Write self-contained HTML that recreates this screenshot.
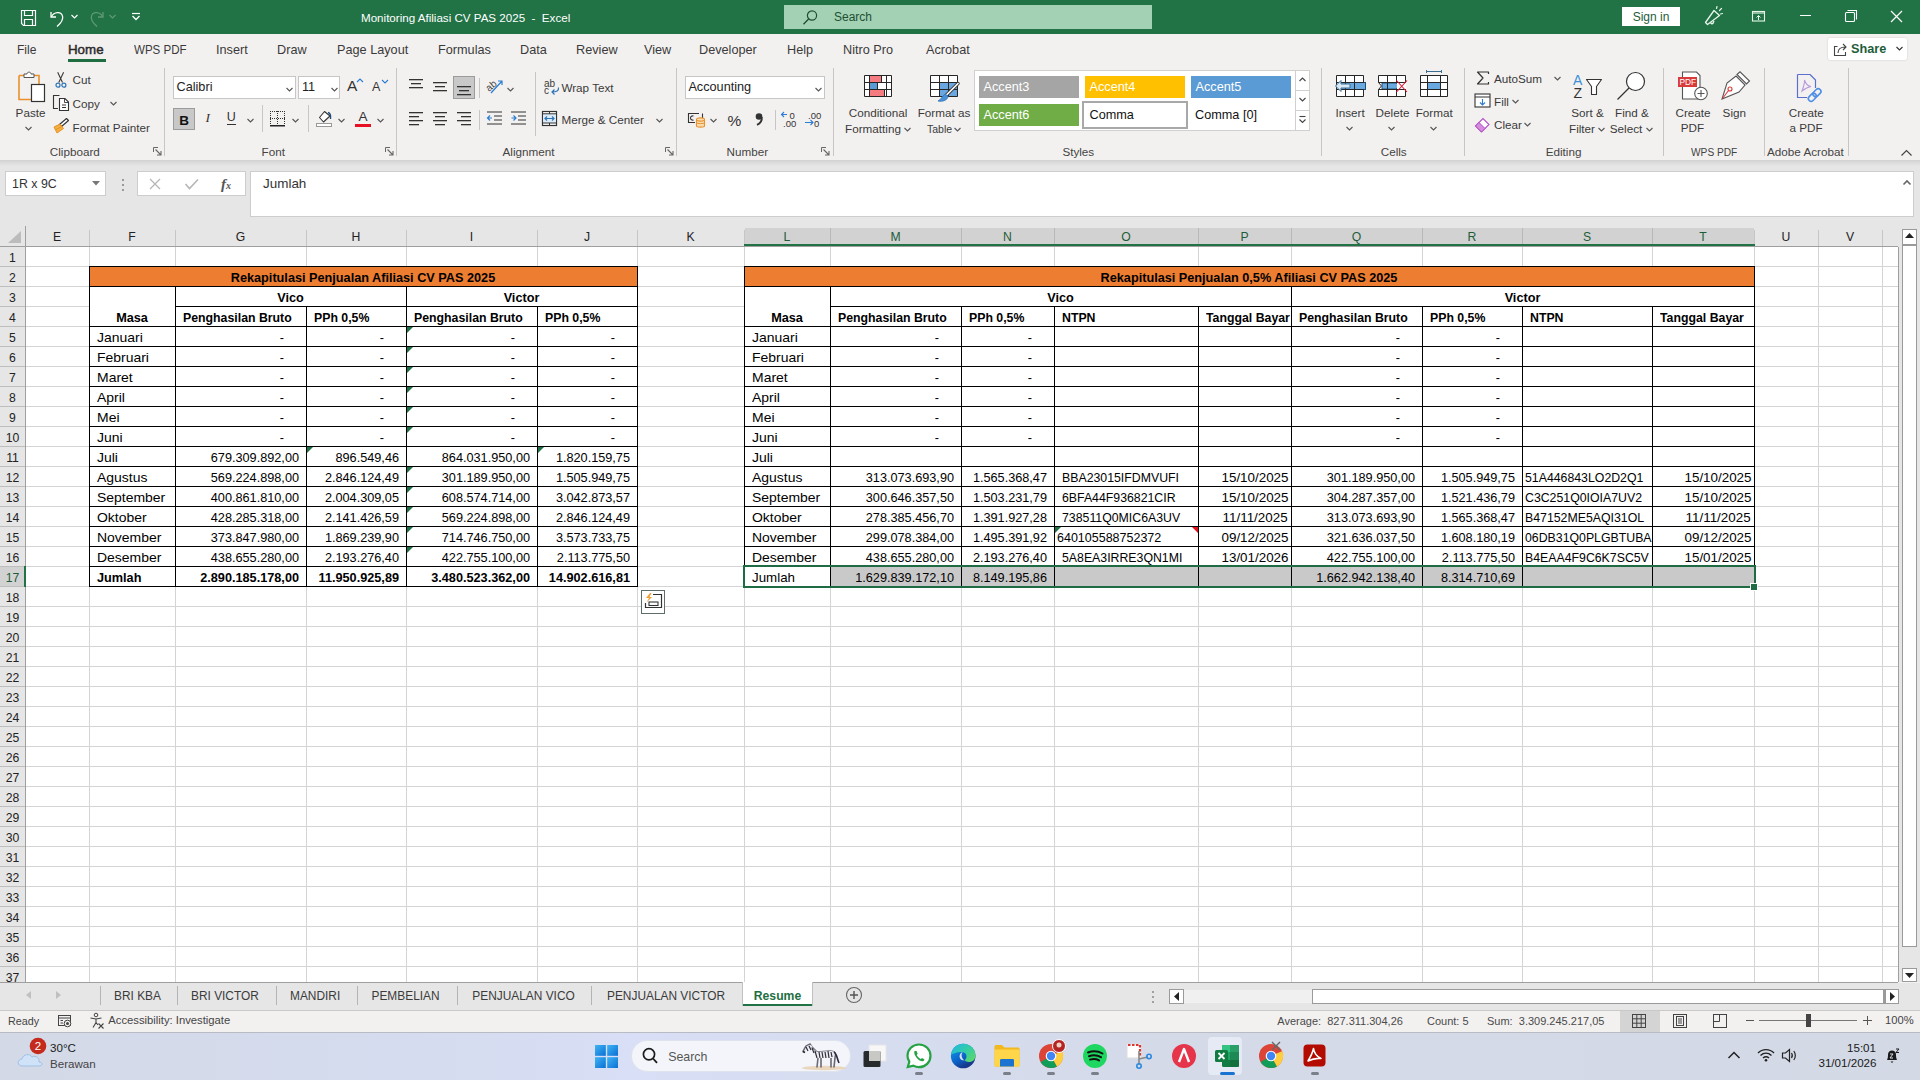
<!DOCTYPE html>
<html><head><meta charset="utf-8"><style>
html,body{margin:0;padding:0;}
body{width:1920px;height:1080px;overflow:hidden;position:relative;background:#f3f2f1;font-family:'Liberation Sans', sans-serif;}
.t{position:absolute;white-space:pre;line-height:1;}
.r{position:absolute;}
.s{position:absolute;overflow:visible;}
</style></head><body>
<div class="r" style="left:0px;top:0px;width:1920px;height:34px;background:#217346;"></div>
<svg class="s" style="left:20px;top:9px;" width="18" height="18" viewBox="0 0 18 18"><path d="M1.5 1.5 H15.5 V16.5 H3.5 L1.5 14.5 Z" fill="none" stroke="#fff" stroke-width="1.2"/><path d="M4.5 1.5 V6.5 H12.5 V1.5" fill="none" stroke="#fff" stroke-width="1.2"/><path d="M4.5 16.5 V10.5 H12.5 V16.5" fill="none" stroke="#fff" stroke-width="1.2"/></svg>
<svg class="s" style="left:48px;top:8px;" width="20" height="20" viewBox="0 0 20 20"><path d="M3 4 V9 H8" fill="none" stroke="#fff" stroke-width="1.3"/><path d="M3.5 8.5 C6 4 13 3 14.5 8 C15.5 11 13 15 9 18.5" fill="none" stroke="#fff" stroke-width="1.3"/></svg>
<svg class="s" style="left:70px;top:13px;" width="10" height="8" viewBox="0 0 10 8"><path d="M1.5 2 L4.5 5 L7.5 2" fill="none" stroke="#fff" stroke-width="1.2"/></svg>
<svg class="s" style="left:86px;top:8px;" width="20" height="20" viewBox="0 0 20 20"><path d="M17 4 V9 H12" fill="none" stroke="#5f9a76" stroke-width="1.3"/><path d="M16.5 8.5 C14 4 7 3 5.5 8 C4.5 11 7 15 11 18.5" fill="none" stroke="#5f9a76" stroke-width="1.3"/></svg>
<svg class="s" style="left:108px;top:13px;" width="10" height="8" viewBox="0 0 10 8"><path d="M1.5 2 L4.5 5 L7.5 2" fill="none" stroke="#5f9a76" stroke-width="1.2"/></svg>
<svg class="s" style="left:130px;top:12px;" width="12" height="10" viewBox="0 0 12 10"><path d="M2 1.5 H10" stroke="#fff" stroke-width="1.2"/><path d="M2.5 4 L6 7.5 L9.5 4" fill="none" stroke="#fff" stroke-width="1.3"/></svg>
<div class="t" style="left:361.00px;top:11.84px;font-size:11.6px;color:#ffffff;">Monitoring Afiliasi CV PAS 2025&nbsp; -&nbsp; Excel</div>
<div class="r" style="left:784px;top:5px;width:368px;height:24px;background:#a2d1b3;"></div>
<svg class="s" style="left:801px;top:9px;" width="18" height="17" viewBox="0 0 18 17"><circle cx="11" cy="6.5" r="4.6" fill="none" stroke="#1f4f33" stroke-width="1.2"/><path d="M7.6 10 L2.5 15.2" stroke="#1f4f33" stroke-width="1.3"/></svg>
<div class="t" style="left:834.00px;top:10.80px;font-size:12px;color:#1f4f33;">Search</div>
<div class="r" style="left:1622px;top:7px;width:58px;height:19px;background:#ffffff;"></div>
<div class="t" style="left:1251.00px;width:800px;text-align:center;top:11.30px;font-size:12px;color:#1e5d3a;">Sign in</div>
<svg class="s" style="left:1700px;top:5px;" width="26" height="24" viewBox="0 0 26 24"><path d="M5.5 17.5 L14 5.5 L19.5 10.5 L7.5 19.5 Z" fill="none" stroke="#e6f6ea" stroke-width="1.3" stroke-linejoin="round"/><path d="M10.5 17 C11 19.5 13 19.5 14 16" fill="none" stroke="#e6f6ea" stroke-width="1.3"/><path d="M16.5 3.5 L17 1.5 M19.5 5.5 L21.5 3.5 M20.5 9 L22.5 8.5" stroke="#e6f6ea" stroke-width="1.2" stroke-linecap="round"/></svg>
<svg class="s" style="left:1750px;top:10px;" width="17" height="13" viewBox="0 0 17 13"><rect x="2.5" y="1.5" width="12" height="9.5" fill="none" stroke="#e6f6ea" stroke-width="1.1"/><path d="M2.5 3 H14.5" stroke="#e6f6ea" stroke-width="1.1"/><path d="M8.5 10 V5.5 M6.5 7.5 L8.5 5.5 L10.5 7.5" fill="none" stroke="#e6f6ea" stroke-width="1"/></svg>
<div class="r" style="left:1800px;top:15px;width:11px;height:1px;background:#ffffff;"></div>
<svg class="s" style="left:1844px;top:9px;" width="14" height="14" viewBox="0 0 14 14"><rect x="1.5" y="3.5" width="9" height="9" fill="none" stroke="#fff" stroke-width="1.1" rx="1"/><path d="M3.5 1.5 H12.5 V10.5" fill="none" stroke="#fff" stroke-width="1.1"/></svg>
<svg class="s" style="left:1890px;top:10px;" width="13" height="13" viewBox="0 0 13 13"><path d="M1 1 L12 12 M12 1 L1 12" stroke="#fff" stroke-width="1.2"/></svg>
<div class="r" style="left:0px;top:34px;width:1920px;height:127px;background:#f3f1f0;"></div>
<div class="t" style="left:17.00px;top:43.50px;font-size:12.7px;color:#3a3a3a;transform:scaleX(0.95);transform-origin:left 0;">File</div>
<div class="t" style="left:68.00px;top:43.50px;font-size:12.7px;color:#2b2b2b;-webkit-text-stroke:0.45px #2b2b2b;transform:scaleX(1.05);transform-origin:left 0;">Home</div>
<div class="t" style="left:134.00px;top:43.50px;font-size:12.7px;color:#3a3a3a;transform:scaleX(0.91);transform-origin:left 0;">WPS PDF</div>
<div class="t" style="left:216.00px;top:43.50px;font-size:12.7px;color:#3a3a3a;">Insert</div>
<div class="t" style="left:277.00px;top:43.50px;font-size:12.7px;color:#3a3a3a;">Draw</div>
<div class="t" style="left:337.00px;top:43.50px;font-size:12.7px;color:#3a3a3a;">Page Layout</div>
<div class="t" style="left:438.00px;top:43.50px;font-size:12.7px;color:#3a3a3a;">Formulas</div>
<div class="t" style="left:520.00px;top:43.50px;font-size:12.7px;color:#3a3a3a;">Data</div>
<div class="t" style="left:576.00px;top:43.50px;font-size:12.7px;color:#3a3a3a;">Review</div>
<div class="t" style="left:644.00px;top:43.50px;font-size:12.7px;color:#3a3a3a;">View</div>
<div class="t" style="left:699.00px;top:43.50px;font-size:12.7px;color:#3a3a3a;">Developer</div>
<div class="t" style="left:787.00px;top:43.50px;font-size:12.7px;color:#3a3a3a;">Help</div>
<div class="t" style="left:843.00px;top:43.50px;font-size:12.7px;color:#3a3a3a;">Nitro Pro</div>
<div class="t" style="left:926.00px;top:43.50px;font-size:12.7px;color:#3a3a3a;">Acrobat</div>
<div class="r" style="left:68px;top:59px;width:38px;height:3px;background:#1e6e42;"></div>
<div class="r" style="left:1828px;top:38px;width:79px;height:22px;background:#ffffff;box-shadow:0 0 2px rgba(0,0,0,0.18);border-radius:2px;"></div>
<svg class="s" style="left:1833px;top:42px;" width="15" height="15" viewBox="0 0 15 15"><path d="M4.5 4.5 H1.5 V13.5 H12.5 V10" fill="none" stroke="#444" stroke-width="1.1"/><path d="M5 11 C5 7 8 5 12.5 5 M10 2 L13 5 L10 8" fill="none" stroke="#444" stroke-width="1.1"/></svg>
<div class="t" style="left:1851.00px;top:42.91px;font-size:12.7px;color:#1e5d3a;font-weight:bold;">Share</div>
<svg class="s" style="left:1895px;top:45px;" width="10" height="8" viewBox="0 0 10 8"><path d="M1.5 2 L4.5 5 L7.5 2" fill="none" stroke="#333" stroke-width="1.1"/></svg>
<svg class="s" style="left:16px;top:71px;" width="32" height="32" viewBox="0 0 32 32"><path d="M3 4.5 H9 M17 4.5 H23 V13" fill="none" stroke="#e8912d" stroke-width="1.6"/><path d="M3 4.5 V28.5 H15" fill="none" stroke="#e8912d" stroke-width="1.6"/><path d="M8 6.5 V3 H11 C11 0.5 15 0.5 15 3 H18 V6.5 Z" fill="#fff" stroke="#555" stroke-width="1"/><rect x="15.5" y="13.5" width="13" height="17" fill="#fff" stroke="#333" stroke-width="1.2"/></svg>
<div class="t" style="left:15.60px;top:106.66px;font-size:11.7px;color:#3a3a3a;">Paste</div>
<svg class="s" style="left:23.5px;top:125px;" width="9" height="7" viewBox="0 0 9 7"><path d="M1.5 2 L4.5 5 L7.5 2" fill="none" stroke="#555" stroke-width="1.1"/></svg>
<svg class="s" style="left:54px;top:70px;" width="13" height="19" viewBox="0 0 13 19"><path d="M3.7 2.2 L8.5 12.5 M9.6 2.2 L4.8 12.5" stroke="#3a3a3a" stroke-width="1.1"/><circle cx="4" cy="15.2" r="2" fill="none" stroke="#2e75b6" stroke-width="1.2"/><circle cx="9.9" cy="15.2" r="2" fill="none" stroke="#2e75b6" stroke-width="1.2"/></svg>
<div class="t" style="left:72.60px;top:74.06px;font-size:11.7px;color:#3a3a3a;">Cut</div>
<svg class="s" style="left:52px;top:94px;" width="18" height="18" viewBox="0 0 18 18"><path d="M7.5 1.5 H1.5 V14.5 H6" fill="none" stroke="#333" stroke-width="1.1"/><path d="M7.5 4.5 H13 L16.5 8 V16.5 H7.5 Z" fill="#fff" stroke="#333" stroke-width="1.1"/><path d="M12.5 4.5 V8.5 H16.5" fill="none" stroke="#333" stroke-width="0.9"/><path d="M10 11 H14 M10 13.5 H14" stroke="#333" stroke-width="1"/></svg>
<div class="t" style="left:72.60px;top:97.56px;font-size:11.7px;color:#3a3a3a;">Copy</div>
<svg class="s" style="left:109.0px;top:100px;" width="9" height="7" viewBox="0 0 9 7"><path d="M1.5 2 L4.5 5 L7.5 2" fill="none" stroke="#555" stroke-width="1.1"/></svg>
<svg class="s" style="left:52px;top:117px;" width="18" height="18" viewBox="0 0 18 18"><path d="M7.5 7.5 L14.5 1.5 L16.5 3.5 L9.5 9.5 Z" fill="#fff" stroke="#333" stroke-width="1.1" stroke-linejoin="round"/><path d="M8 7 L2 10 L5 16 L11.5 11.5 Z" fill="#f5b041" stroke="#e08a1e" stroke-width="0.9" stroke-linejoin="round"/><path d="M4 12.5 L9 10" stroke="#e08a1e" stroke-width="0.8"/></svg>
<div class="t" style="left:72.60px;top:121.75px;font-size:11.7px;color:#3a3a3a;">Format Painter</div>
<div class="t" style="left:49.80px;top:145.56px;font-size:11.7px;color:#444444;">Clipboard</div>
<svg class="s" style="left:153px;top:147px;" width="9" height="9" viewBox="0 0 9 9"><path d="M0.5 5 V0.5 H5" fill="none" stroke="#666" stroke-width="1"/><path d="M2.5 2.5 L8 8 M8 4 V8 H4" fill="none" stroke="#666" stroke-width="1.1"/></svg>
<div class="r" style="left:164px;top:68px;width:1px;height:88px;background:#c8c6c4;"></div>
<div class="r" style="left:173px;top:76px;width:123px;height:23px;background:#ffffff;box-shadow:inset 0 0 0 1px #c8c6c4;"></div>
<div class="t" style="left:176.50px;top:80.70px;font-size:12.7px;color:#222;">Calibri</div>
<svg class="s" style="left:284.5px;top:85.5px;" width="9" height="7" viewBox="0 0 9 7"><path d="M1.5 2 L4.5 5 L7.5 2" fill="none" stroke="#555" stroke-width="1.1"/></svg>
<div class="r" style="left:298px;top:76px;width:42px;height:23px;background:#ffffff;box-shadow:inset 0 0 0 1px #c8c6c4;"></div>
<div class="t" style="left:302.00px;top:80.70px;font-size:12.7px;color:#222;">11</div>
<svg class="s" style="left:329.5px;top:85.5px;" width="9" height="7" viewBox="0 0 9 7"><path d="M1.5 2 L4.5 5 L7.5 2" fill="none" stroke="#555" stroke-width="1.1"/></svg>
<div class="t" style="left:347.00px;top:78.33px;font-size:15.5px;color:#333;">A</div>
<svg class="s" style="left:356px;top:78px;" width="8" height="5" viewBox="0 0 8 5"><path d="M1 4 L4 1 L7 4" fill="none" stroke="#2b7cd3" stroke-width="1.1"/></svg>
<div class="t" style="left:372.00px;top:80.88px;font-size:12.5px;color:#333;">A</div>
<svg class="s" style="left:381px;top:79px;" width="8" height="5" viewBox="0 0 8 5"><path d="M1 1 L4 4 L7 1" fill="none" stroke="#2b7cd3" stroke-width="1.1"/></svg>
<div class="r" style="left:173px;top:108px;width:22px;height:22px;background:#c8c8c8;box-shadow:inset 0 0 0 1px #9c9c9c;"></div>
<div class="t" style="left:-216.00px;width:800px;text-align:center;top:113.53px;font-size:13.5px;color:#111;font-weight:bold;">B</div>
<div class="t" style="left:205.50px;top:111.03px;font-size:13.5px;color:#333;font-family:'Liberation Serif';"><i>I</i></div>
<div class="t" style="left:226.80px;top:111.38px;font-size:12.5px;color:#333;">U</div>
<div class="r" style="left:227px;top:124px;width:9px;height:1px;background:#333;"></div>
<svg class="s" style="left:245.5px;top:117px;" width="9" height="7" viewBox="0 0 9 7"><path d="M1.5 2 L4.5 5 L7.5 2" fill="none" stroke="#555" stroke-width="1.1"/></svg>
<div class="r" style="left:262px;top:105px;width:1px;height:27px;background:#c8c6c4;"></div>
<svg class="s" style="left:270px;top:111px;" width="17" height="17" viewBox="0 0 17 17"><rect x="0" y="0" width="1" height="1" fill="#333"/><rect x="0" y="0" width="1" height="1" fill="#333"/><rect x="14" y="0" width="1" height="1" fill="#333"/><rect x="0" y="7" width="1" height="1" fill="#333"/><rect x="7" y="0" width="1" height="1" fill="#333"/><rect x="2" y="0" width="1" height="1" fill="#333"/><rect x="0" y="2" width="1" height="1" fill="#333"/><rect x="14" y="2" width="1" height="1" fill="#333"/><rect x="2" y="7" width="1" height="1" fill="#333"/><rect x="7" y="2" width="1" height="1" fill="#333"/><rect x="4" y="0" width="1" height="1" fill="#333"/><rect x="0" y="4" width="1" height="1" fill="#333"/><rect x="14" y="4" width="1" height="1" fill="#333"/><rect x="4" y="7" width="1" height="1" fill="#333"/><rect x="7" y="4" width="1" height="1" fill="#333"/><rect x="6" y="0" width="1" height="1" fill="#333"/><rect x="0" y="6" width="1" height="1" fill="#333"/><rect x="14" y="6" width="1" height="1" fill="#333"/><rect x="6" y="7" width="1" height="1" fill="#333"/><rect x="7" y="6" width="1" height="1" fill="#333"/><rect x="8" y="0" width="1" height="1" fill="#333"/><rect x="0" y="8" width="1" height="1" fill="#333"/><rect x="14" y="8" width="1" height="1" fill="#333"/><rect x="8" y="7" width="1" height="1" fill="#333"/><rect x="7" y="8" width="1" height="1" fill="#333"/><rect x="10" y="0" width="1" height="1" fill="#333"/><rect x="0" y="10" width="1" height="1" fill="#333"/><rect x="14" y="10" width="1" height="1" fill="#333"/><rect x="10" y="7" width="1" height="1" fill="#333"/><rect x="7" y="10" width="1" height="1" fill="#333"/><rect x="12" y="0" width="1" height="1" fill="#333"/><rect x="0" y="12" width="1" height="1" fill="#333"/><rect x="14" y="12" width="1" height="1" fill="#333"/><rect x="12" y="7" width="1" height="1" fill="#333"/><rect x="7" y="12" width="1" height="1" fill="#333"/><rect x="14" y="0" width="1" height="1" fill="#333"/><rect x="0" y="14" width="1" height="1" fill="#333"/><rect x="14" y="14" width="1" height="1" fill="#333"/><rect x="14" y="7" width="1" height="1" fill="#333"/><rect x="7" y="14" width="1" height="1" fill="#333"/><rect x="0" y="14" width="15" height="1.5" fill="#222"/></svg>
<svg class="s" style="left:291.1px;top:117px;" width="9" height="7" viewBox="0 0 9 7"><path d="M1.5 2 L4.5 5 L7.5 2" fill="none" stroke="#555" stroke-width="1.1"/></svg>
<div class="r" style="left:308px;top:105px;width:1px;height:27px;background:#c8c6c4;"></div>
<svg class="s" style="left:315px;top:109px;" width="19" height="19" viewBox="0 0 19 19"><path d="M4.5 8.5 L9.5 2.5 L15 7 L8.5 13 Z" fill="#fff" stroke="#333" stroke-width="1.1" stroke-linejoin="round"/><path d="M13 3.5 C15.5 4 16 6 15.5 10" fill="none" stroke="#1f4e79" stroke-width="1.4"/><rect x="1.5" y="14.5" width="15" height="3" fill="#fff" stroke="#999" stroke-width="1"/></svg>
<svg class="s" style="left:337.0px;top:117px;" width="9" height="7" viewBox="0 0 9 7"><path d="M1.5 2 L4.5 5 L7.5 2" fill="none" stroke="#555" stroke-width="1.1"/></svg>
<div class="t" style="left:358.50px;top:110.33px;font-size:13.5px;color:#333;">A</div>
<div class="r" style="left:355px;top:124px;width:16px;height:3px;background:#e81123;"></div>
<svg class="s" style="left:376.1px;top:117px;" width="9" height="7" viewBox="0 0 9 7"><path d="M1.5 2 L4.5 5 L7.5 2" fill="none" stroke="#555" stroke-width="1.1"/></svg>
<div class="t" style="left:261.50px;top:145.56px;font-size:11.7px;color:#444444;">Font</div>
<svg class="s" style="left:385px;top:147px;" width="9" height="9" viewBox="0 0 9 9"><path d="M0.5 5 V0.5 H5" fill="none" stroke="#666" stroke-width="1"/><path d="M2.5 2.5 L8 8 M8 4 V8 H4" fill="none" stroke="#666" stroke-width="1.1"/></svg>
<div class="r" style="left:396px;top:68px;width:1px;height:88px;background:#c8c6c4;"></div>
<svg class="s" style="left:409px;top:79px;" width="16" height="14" viewBox="0 0 16 14"><rect x="0" y="0" width="14" height="1.3" fill="#333"/><rect x="2" y="4" width="10" height="1.3" fill="#333"/><rect x="0" y="8" width="14" height="1.3" fill="#333"/></svg>
<svg class="s" style="left:433px;top:82px;" width="16" height="14" viewBox="0 0 16 14"><rect x="0" y="0" width="14" height="1.3" fill="#333"/><rect x="2" y="4" width="10" height="1.3" fill="#333"/><rect x="0" y="8" width="14" height="1.3" fill="#333"/></svg>
<div class="r" style="left:453px;top:76px;width:22px;height:23px;background:#c8c8c8;box-shadow:inset 0 0 0 1px #9c9c9c;"></div>
<svg class="s" style="left:457px;top:86px;" width="16" height="14" viewBox="0 0 16 14"><rect x="0" y="0" width="14" height="1.3" fill="#333"/><rect x="2" y="4" width="10" height="1.3" fill="#333"/><rect x="0" y="8" width="14" height="1.3" fill="#333"/></svg>
<div class="r" style="left:479px;top:78px;width:1px;height:20px;background:#c8c6c4;"></div>
<svg class="s" style="left:485px;top:77px;" width="20" height="18" viewBox="0 0 20 18"><text x="0" y="12" font-size="10" font-family="Liberation Sans" fill="#444" transform="rotate(-40 6 8)">ab</text><path d="M6 16 L17 4 M13 4 H17 V8" fill="none" stroke="#2b7cd3" stroke-width="1.2"/></svg>
<svg class="s" style="left:506.3px;top:86px;" width="9" height="7" viewBox="0 0 9 7"><path d="M1.5 2 L4.5 5 L7.5 2" fill="none" stroke="#555" stroke-width="1.1"/></svg>
<svg class="s" style="left:409px;top:112px;" width="16" height="18" viewBox="0 0 16 18"><rect x="0" y="0" width="14" height="1.3" fill="#333"/><rect x="0" y="4" width="10" height="1.3" fill="#333"/><rect x="0" y="8" width="14" height="1.3" fill="#333"/><rect x="0" y="12" width="10" height="1.3" fill="#333"/></svg>
<svg class="s" style="left:433px;top:112px;" width="16" height="18" viewBox="0 0 16 18"><rect x="0" y="0" width="14" height="1.3" fill="#333"/><rect x="2" y="4" width="10" height="1.3" fill="#333"/><rect x="0" y="8" width="14" height="1.3" fill="#333"/><rect x="2" y="12" width="10" height="1.3" fill="#333"/></svg>
<svg class="s" style="left:457px;top:112px;" width="16" height="18" viewBox="0 0 16 18"><rect x="0" y="0" width="14" height="1.3" fill="#333"/><rect x="4" y="4" width="10" height="1.3" fill="#333"/><rect x="0" y="8" width="14" height="1.3" fill="#333"/><rect x="4" y="12" width="10" height="1.3" fill="#333"/></svg>
<div class="r" style="left:479px;top:110px;width:1px;height:20px;background:#c8c6c4;"></div>
<svg class="s" style="left:487px;top:111px;" width="16" height="16" viewBox="0 0 16 16"><path d="M0 1 H15 M7 5 H15 M7 9 H15 M0 13 H15" stroke="#333" stroke-width="1.2"/><path d="M5 7 H0.5 M3 4.5 L0.5 7 L3 9.5" fill="none" stroke="#2b7cd3" stroke-width="1.2"/></svg>
<svg class="s" style="left:511px;top:111px;" width="16" height="16" viewBox="0 0 16 16"><path d="M0 1 H15 M7 5 H15 M7 9 H15 M0 13 H15" stroke="#333" stroke-width="1.2"/><path d="M0.5 7 H5 M2.5 4.5 L5 7 L2.5 9.5" fill="none" stroke="#2b7cd3" stroke-width="1.2"/></svg>
<div class="r" style="left:534.7px;top:72px;width:1px;height:64px;background:#c8c6c4;"></div>
<svg class="s" style="left:543px;top:78px;" width="18" height="18" viewBox="0 0 18 18"><text x="1" y="8.5" font-size="10" font-family="Liberation Sans" fill="#3a3a3a">ab</text><text x="1" y="15.5" font-size="10" font-family="Liberation Sans" fill="#3a3a3a">c</text><path d="M15.5 9.5 C16 13 13.5 14 9 14 M11.5 11.5 L9 14 L11.5 16.5" fill="none" stroke="#2e75b6" stroke-width="1.2"/></svg>
<div class="t" style="left:561.40px;top:82.06px;font-size:11.7px;color:#3a3a3a;">Wrap Text</div>
<svg class="s" style="left:541px;top:110px;" width="17" height="17" viewBox="0 0 17 17"><rect x="1.5" y="1.5" width="14" height="14" fill="#fff" stroke="#333" stroke-width="1.2"/><rect x="2" y="4" width="13" height="9" fill="#dcebf7"/><path d="M1.5 3.8 H15.5 M1.5 13 H15.5 M8.5 1.5 V3.8 M8.5 13 V15.5" stroke="#333" stroke-width="1"/><path d="M4 8.5 H13 M6 6.5 L4 8.5 L6 10.5 M11 6.5 L13 8.5 L11 10.5" fill="none" stroke="#2e75b6" stroke-width="1.2"/></svg>
<div class="t" style="left:561.40px;top:113.76px;font-size:11.7px;color:#3a3a3a;">Merge &amp; Center</div>
<svg class="s" style="left:655.1px;top:117px;" width="9" height="7" viewBox="0 0 9 7"><path d="M1.5 2 L4.5 5 L7.5 2" fill="none" stroke="#555" stroke-width="1.1"/></svg>
<div class="t" style="left:502.50px;top:145.56px;font-size:11.7px;color:#444444;">Alignment</div>
<svg class="s" style="left:665px;top:147px;" width="9" height="9" viewBox="0 0 9 9"><path d="M0.5 5 V0.5 H5" fill="none" stroke="#666" stroke-width="1"/><path d="M2.5 2.5 L8 8 M8 4 V8 H4" fill="none" stroke="#666" stroke-width="1.1"/></svg>
<div class="r" style="left:676px;top:68px;width:1px;height:88px;background:#c8c6c4;"></div>
<div class="r" style="left:685px;top:76px;width:140px;height:23px;background:#ffffff;box-shadow:inset 0 0 0 1px #c8c6c4;"></div>
<div class="t" style="left:688.40px;top:81.20px;font-size:12.7px;color:#222;">Accounting</div>
<svg class="s" style="left:813.5px;top:85.5px;" width="9" height="7" viewBox="0 0 9 7"><path d="M1.5 2 L4.5 5 L7.5 2" fill="none" stroke="#555" stroke-width="1.1"/></svg>
<svg class="s" style="left:687px;top:112px;" width="19" height="16" viewBox="0 0 19 16"><path d="M12 1.5 H1.5 V10.5 H8" fill="none" stroke="#333" stroke-width="1.1"/><path d="M15.5 1.5 V6" stroke="#333" stroke-width="1.1"/><path d="M6.5 4 C5 3.5 3.5 4.5 3.5 6 C3.5 7.5 5 8.5 6.5 8" fill="none" stroke="#333" stroke-width="1.1"/><path d="M9.5 7.5 V14 C9.5 15.5 17.5 15.5 17.5 14 V7.5" fill="#f7dcb0" stroke="#e8912d" stroke-width="1.1"/><ellipse cx="13.5" cy="7.5" rx="4" ry="1.6" fill="#f7dcb0" stroke="#e8912d" stroke-width="1.1"/><path d="M9.5 10.5 C9.5 12 17.5 12 17.5 10.5" fill="none" stroke="#e8912d" stroke-width="1"/></svg>
<svg class="s" style="left:709.3px;top:117px;" width="9" height="7" viewBox="0 0 9 7"><path d="M1.5 2 L4.5 5 L7.5 2" fill="none" stroke="#555" stroke-width="1.1"/></svg>
<div class="t" style="left:727.40px;top:112.83px;font-size:15.5px;color:#333;">%</div>
<svg class="s" style="left:754px;top:111px;" width="10" height="15" viewBox="0 0 10 15"><circle cx="5" cy="5.5" r="3.3" fill="#333"/><path d="M7.8 6 C8.2 9.5 6 12.5 3 13.8" fill="none" stroke="#333" stroke-width="1.8"/></svg>
<div class="r" style="left:774.5px;top:110px;width:1px;height:20px;background:#c8c6c4;"></div>
<svg class="s" style="left:780px;top:110px;" width="20" height="17" viewBox="0 0 20 17"><path d="M7 4.5 H1.5 M4 2 L1.5 4.5 L4 7" fill="none" stroke="#2b7cd3" stroke-width="1.1"/><text x="9.5" y="8.5" font-size="9.5" font-family="Liberation Sans" fill="#333">0</text><text x="3" y="16.5" font-size="9.5" font-family="Liberation Sans" fill="#333">.00</text></svg>
<svg class="s" style="left:804px;top:110px;" width="20" height="17" viewBox="0 0 20 17"><text x="4" y="8.5" font-size="9.5" font-family="Liberation Sans" fill="#333">.00</text><path d="M1 12.5 H9 M6.5 10 L9 12.5 L6.5 15" fill="none" stroke="#2b7cd3" stroke-width="1.1"/><text x="10" y="16.5" font-size="9.5" font-family="Liberation Sans" fill="#333">0</text></svg>
<div class="t" style="left:726.60px;top:145.56px;font-size:11.7px;color:#444444;">Number</div>
<svg class="s" style="left:821px;top:147px;" width="9" height="9" viewBox="0 0 9 9"><path d="M0.5 5 V0.5 H5" fill="none" stroke="#666" stroke-width="1"/><path d="M2.5 2.5 L8 8 M8 4 V8 H4" fill="none" stroke="#666" stroke-width="1.1"/></svg>
<div class="r" style="left:832.8px;top:68px;width:1px;height:88px;background:#c8c6c4;"></div>
<svg class="s" style="left:864px;top:75px;" width="29" height="23" viewBox="0 0 29 23"><rect x="0.5" y="0.5" width="27" height="21" fill="#fff"/><rect x="6" y="1" width="11.5" height="6.5" fill="#f47c80"/><rect x="6" y="8" width="7.5" height="6.5" fill="#5b9bd5"/><rect x="6" y="15" width="14" height="6.5" fill="#f47c80"/><path d="M0.5 0.5 H27.5 V21.5 H0.5 Z M0.5 7.5 H27.5 M0.5 14.5 H27.5 M5.5 0.5 V21.5 M22.5 0.5 V21.5 M17.5 0.5 V7.5 M13.5 7.5 V14.5 M20.5 14.5 V21.5" fill="none" stroke="#262626" stroke-width="1"/></svg>
<div class="t" style="left:478.00px;width:800px;text-align:center;top:106.96px;font-size:11.7px;color:#3a3a3a;">Conditional</div>
<div class="t" style="left:473.00px;width:800px;text-align:center;top:122.75px;font-size:11.7px;color:#3a3a3a;">Formatting</div>
<svg class="s" style="left:903.1px;top:126px;" width="9" height="7" viewBox="0 0 9 7"><path d="M1.5 2 L4.5 5 L7.5 2" fill="none" stroke="#555" stroke-width="1.1"/></svg>
<svg class="s" style="left:930px;top:75px;" width="30" height="28" viewBox="0 0 30 28"><rect x="0.5" y="0.5" width="27" height="21" fill="#fff"/><rect x="10" y="7.5" width="17.5" height="14" fill="#6aa6e0"/><path d="M0.5 0.5 H27.5 V21.5 H0.5 Z M0.5 7.5 H27.5 M0.5 14.5 H27.5 M9.5 0.5 V21.5 M18.5 0.5 V21.5" fill="none" stroke="#262626" stroke-width="1"/><path d="M28 8.5 L16.5 20" stroke="#3a3a3a" stroke-width="3.4" stroke-linecap="round"/><path d="M28 8.5 L16.5 20" stroke="#fff" stroke-width="1.6" stroke-linecap="round"/><path d="M15.5 19 C12 20.5 11.5 24.5 8 26 C13 27 17.5 25 18 21.5 Z" fill="#4a90d9" stroke="#2e75b6" stroke-width="0.8"/></svg>
<div class="t" style="left:544.00px;width:800px;text-align:center;top:106.96px;font-size:11.7px;color:#3a3a3a;">Format as</div>
<div class="t" style="left:926.50px;top:122.75px;font-size:11.7px;color:#3a3a3a;transform:scaleX(0.9);transform-origin:left 0;">Table</div>
<svg class="s" style="left:952.5px;top:126px;" width="9" height="7" viewBox="0 0 9 7"><path d="M1.5 2 L4.5 5 L7.5 2" fill="none" stroke="#555" stroke-width="1.1"/></svg>
<div class="r" style="left:974px;top:70px;width:336px;height:61px;background:#ffffff;box-shadow:inset 0 0 0 1px #d2d0ce;"></div>
<div class="r" style="left:979px;top:76px;width:100px;height:22px;background:#a5a5a5;"></div>
<div class="t" style="left:983.50px;top:81.20px;font-size:12.7px;color:#ffffff;">Accent3</div>
<div class="r" style="left:1085px;top:76px;width:100px;height:22px;background:#ffc000;"></div>
<div class="t" style="left:1089.50px;top:81.20px;font-size:12.7px;color:#ffffff;">Accent4</div>
<div class="r" style="left:1191px;top:76px;width:100px;height:22px;background:#5b9bd5;"></div>
<div class="t" style="left:1195.50px;top:81.20px;font-size:12.7px;color:#ffffff;">Accent5</div>
<div class="r" style="left:979px;top:104px;width:100px;height:22px;background:#70ad47;"></div>
<div class="t" style="left:983.50px;top:108.70px;font-size:12.7px;color:#ffffff;">Accent6</div>
<div class="r" style="left:1082px;top:101px;width:106px;height:28px;background:#ffffff;box-shadow:inset 0 0 0 2px #a8a8a8;"></div>
<div class="t" style="left:1089.50px;top:108.70px;font-size:12.7px;color:#111;">Comma</div>
<div class="t" style="left:1195.00px;top:108.70px;font-size:12.7px;color:#111;">Comma [0]</div>
<div class="r" style="left:1295px;top:70px;width:1px;height:61px;background:#d2d0ce;"></div>
<div class="r" style="left:1295px;top:90px;width:15px;height:1px;background:#d2d0ce;"></div>
<div class="r" style="left:1295px;top:110px;width:15px;height:1px;background:#d2d0ce;"></div>
<svg class="s" style="left:1298px;top:76px;" width="9" height="7" viewBox="0 0 9 7"><path d="M1.5 5 L4.5 2 L7.5 5" fill="none" stroke="#444" stroke-width="1.1"/></svg>
<svg class="s" style="left:1298px;top:96px;" width="9" height="7" viewBox="0 0 9 7"><path d="M1.5 2 L4.5 5 L7.5 2" fill="none" stroke="#444" stroke-width="1.1"/></svg>
<svg class="s" style="left:1298px;top:115px;" width="9" height="10" viewBox="0 0 9 10"><path d="M1.5 1.5 H7.5" stroke="#444" stroke-width="1.1"/><path d="M1.5 4.5 L4.5 7.5 L7.5 4.5" fill="none" stroke="#444" stroke-width="1.1"/></svg>
<div class="t" style="left:1062.40px;top:145.56px;font-size:11.7px;color:#444444;">Styles</div>
<div class="r" style="left:1320.6px;top:68px;width:1px;height:88px;background:#c8c6c4;"></div>
<svg class="s" style="left:1335px;top:75px;" width="32" height="23" viewBox="0 0 32 23"><path d="M1.5 0.5 H28.5 V21.5 H1.5 Z" fill="#fff" stroke="#262626"/><rect x="5.5" y="7.5" width="25" height="7" fill="#6aa8e0" stroke="#1f4e79" stroke-width="1"/><path d="M1.5 7.5 H28.5 M1.5 14.5 H28.5 M10.5 0.5 V21.5 M19.5 0.5 V21.5" stroke="#262626"/><path d="M0.5 11 L6 5.5 V9 H15 V13 H6 V16.5 Z" fill="#dbeaf7" stroke="#3b6e91" stroke-width="1"/></svg>
<div class="t" style="left:1335.50px;top:106.96px;font-size:11.7px;color:#3a3a3a;">Insert</div>
<svg class="s" style="left:1344.5px;top:125px;" width="9" height="7" viewBox="0 0 9 7"><path d="M1.5 2 L4.5 5 L7.5 2" fill="none" stroke="#555" stroke-width="1.1"/></svg>
<svg class="s" style="left:1377px;top:75px;" width="32" height="23" viewBox="0 0 32 23"><path d="M1.5 7.5 V0.5 H28.5 V21.5 H1.5 V14.5 L4.5 11 Z" fill="#fff" stroke="#262626"/><path d="M5 8 H19 L22 11 L19 14 H5 Z" fill="#6aa8e0" stroke="#1f4e79" stroke-width="0.9"/><path d="M1.5 7.5 H28.5 M1.5 14.5 H28.5 M10.5 0.5 V21.5 M19.5 0.5 V7.5 M19.5 14.5 V21.5" stroke="#262626"/><rect x="20" y="8" width="9" height="6" fill="#fff"/><path d="M19.5 5.5 L30 17 M30 5.5 L19.5 17" stroke="#e8112d" stroke-width="1.1"/></svg>
<div class="t" style="left:1375.60px;top:106.96px;font-size:11.7px;color:#3a3a3a;">Delete</div>
<svg class="s" style="left:1386.5px;top:125px;" width="9" height="7" viewBox="0 0 9 7"><path d="M1.5 2 L4.5 5 L7.5 2" fill="none" stroke="#555" stroke-width="1.1"/></svg>
<svg class="s" style="left:1419px;top:70px;" width="30" height="28" viewBox="0 0 30 28"><path d="M7.5 1.5 H22.5 M7.5 0 V3 M22.5 0 V3" stroke="#3b6e91" stroke-width="1"/><path d="M1.5 5.5 H28.5 V26.5 H1.5 Z" fill="#fff" stroke="#262626"/><rect x="8.5" y="12.5" width="13" height="7" fill="#6aa8e0"/><path d="M1.5 12.5 H28.5 M1.5 19.5 H28.5 M8.5 5.5 V26.5 M21.5 5.5 V26.5" stroke="#262626"/></svg>
<div class="t" style="left:1415.70px;top:106.96px;font-size:11.7px;color:#3a3a3a;">Format</div>
<svg class="s" style="left:1428.5px;top:125px;" width="9" height="7" viewBox="0 0 9 7"><path d="M1.5 2 L4.5 5 L7.5 2" fill="none" stroke="#555" stroke-width="1.1"/></svg>
<div class="t" style="left:1380.70px;top:145.56px;font-size:11.7px;color:#444444;">Cells</div>
<div class="r" style="left:1463.6px;top:68px;width:1px;height:88px;background:#c8c6c4;"></div>
<svg class="s" style="left:1476px;top:71px;" width="14" height="14" viewBox="0 0 14 14"><path d="M12.5 3 V1 H1.5 L7 7 L1.5 13 H12.5 V11" fill="none" stroke="#333" stroke-width="1.2" stroke-linejoin="round"/></svg>
<div class="t" style="left:1494.00px;top:72.66px;font-size:11.7px;color:#3a3a3a;">AutoSum</div>
<svg class="s" style="left:1552.5px;top:75px;" width="9" height="7" viewBox="0 0 9 7"><path d="M1.5 2 L4.5 5 L7.5 2" fill="none" stroke="#555" stroke-width="1.1"/></svg>
<svg class="s" style="left:1474px;top:93px;" width="18" height="16" viewBox="0 0 18 16"><rect x="1" y="1" width="15" height="13" fill="#fff" stroke="#333" stroke-width="1.1"/><path d="M1 4 H16" stroke="#333"/><path d="M8.5 6 V12 M6 9.5 L8.5 12 L11 9.5" fill="none" stroke="#2b7cd3" stroke-width="1.1"/></svg>
<div class="t" style="left:1494.00px;top:96.06px;font-size:11.7px;color:#3a3a3a;">Fill</div>
<svg class="s" style="left:1510.9px;top:98px;" width="9" height="7" viewBox="0 0 9 7"><path d="M1.5 2 L4.5 5 L7.5 2" fill="none" stroke="#555" stroke-width="1.1"/></svg>
<svg class="s" style="left:1474px;top:116px;" width="18" height="16" viewBox="0 0 18 16"><path d="M1.5 10 L9 2.5 L15 8.5 L7.5 16 Z" fill="#fff" stroke="#b150c2" stroke-width="1.1"/><path d="M1.5 10 L5 6.5 L11 12.5 L7.5 16 Z" fill="#d68de0" stroke="#b150c2" stroke-width="1"/></svg>
<div class="t" style="left:1494.00px;top:118.75px;font-size:11.7px;color:#3a3a3a;">Clear</div>
<svg class="s" style="left:1523.3px;top:121px;" width="9" height="7" viewBox="0 0 9 7"><path d="M1.5 2 L4.5 5 L7.5 2" fill="none" stroke="#555" stroke-width="1.1"/></svg>
<svg class="s" style="left:1572px;top:72px;" width="32" height="28" viewBox="0 0 32 28"><text x="1" y="12.6" font-size="14" font-family="Liberation Sans" fill="#3d8fd6">A</text><text x="1.5" y="26.3" font-size="14" font-family="Liberation Sans" fill="#333">Z</text><path d="M14.5 7.5 H29.5 L24.5 14.5 V22.5 H19.5 V14.5 Z" fill="#fff" stroke="#333" stroke-width="1.1" stroke-linejoin="round"/></svg>
<div class="t" style="left:1187.50px;width:800px;text-align:center;top:106.96px;font-size:11.7px;color:#3a3a3a;">Sort &amp;</div>
<div class="t" style="left:1182.00px;width:800px;text-align:center;top:122.75px;font-size:11.7px;color:#3a3a3a;">Filter</div>
<svg class="s" style="left:1597.0px;top:126px;" width="9" height="7" viewBox="0 0 9 7"><path d="M1.5 2 L4.5 5 L7.5 2" fill="none" stroke="#555" stroke-width="1.1"/></svg>
<svg class="s" style="left:1616px;top:71px;" width="31" height="30" viewBox="0 0 31 30"><circle cx="19.5" cy="10.5" r="9" fill="#fff" stroke="#333" stroke-width="1.2"/><path d="M13 17 L1.5 28.5" stroke="#333" stroke-width="1.2"/></svg>
<div class="t" style="left:1232.00px;width:800px;text-align:center;top:106.96px;font-size:11.7px;color:#3a3a3a;">Find &amp;</div>
<div class="t" style="left:1226.00px;width:800px;text-align:center;top:122.75px;font-size:11.7px;color:#3a3a3a;">Select</div>
<svg class="s" style="left:1644.5px;top:126px;" width="9" height="7" viewBox="0 0 9 7"><path d="M1.5 2 L4.5 5 L7.5 2" fill="none" stroke="#555" stroke-width="1.1"/></svg>
<div class="t" style="left:1545.70px;top:145.56px;font-size:11.7px;color:#444444;">Editing</div>
<div class="r" style="left:1663px;top:68px;width:1px;height:88px;background:#c8c6c4;"></div>
<svg class="s" style="left:1677px;top:71px;" width="33" height="30" viewBox="0 0 33 30"><path d="M5.5 1 H19.5 L23 4.5 V28 H5.5 Z" fill="#fff" stroke="#555" stroke-width="1.1"/><rect x="1" y="6" width="19" height="10" fill="#d93a3a"/><text x="2.5" y="14.3" font-size="8.3" font-family="Liberation Sans" fill="#fff">PDF</text><circle cx="24" cy="22.5" r="6.3" fill="#fff" stroke="#555" stroke-width="1.1"/><path d="M24 19 V26 M20.5 22.5 H27.5" stroke="#555" stroke-width="1.1"/></svg>
<div class="t" style="left:1293.00px;width:800px;text-align:center;top:106.76px;font-size:11.7px;color:#3a3a3a;">Create</div>
<div class="t" style="left:1292.50px;width:800px;text-align:center;top:122.25px;font-size:11.7px;color:#3a3a3a;">PDF</div>
<svg class="s" style="left:1720px;top:71px;" width="31" height="30" viewBox="0 0 31 30"><path d="M17 3.5 L20 0.8 L29.5 10 L26.5 13 Z" fill="#fff" stroke="#555" stroke-width="1.1"/><path d="M16 5 L25 14 L19 21 L2 28 L7 12 Z" fill="#fff" stroke="#555" stroke-width="1.1"/><circle cx="10" cy="18" r="2" fill="none" stroke="#d93a3a" stroke-width="1.1"/><path d="M2.5 27.5 L8.5 19.5" stroke="#d93a3a" stroke-width="1.1"/></svg>
<div class="t" style="left:1334.30px;width:800px;text-align:center;top:106.76px;font-size:11.7px;color:#3a3a3a;">Sign</div>
<div class="t" style="left:1691.00px;top:145.56px;font-size:11.7px;color:#444444;transform:scaleX(0.87);transform-origin:left 0;">WPS PDF</div>
<div class="r" style="left:1763.6px;top:68px;width:1px;height:88px;background:#c8c6c4;"></div>
<svg class="s" style="left:1795px;top:73px;" width="30" height="30" viewBox="0 0 30 30"><path d="M2.5 1.5 H15 L20.5 7 V15 M2.5 1.5 V24.5 H12" fill="none" stroke="#5a6fd0" stroke-width="1.2" stroke-linejoin="round"/><path d="M7 18 C8.5 14 10 10 9.5 7 C10.5 10.5 13 13 16 13.5 C12.5 14 9.5 16 7 18 Z" fill="none" stroke="#b79be0" stroke-width="1.1"/><g transform="rotate(-45 20 22)"><rect x="12" y="19" width="9" height="5.5" rx="2.75" fill="none" stroke="#4f8fe6" stroke-width="1.6"/><rect x="18.5" y="19" width="9" height="5.5" rx="2.75" fill="none" stroke="#4f8fe6" stroke-width="1.6"/></g></svg>
<div class="t" style="left:1406.30px;width:800px;text-align:center;top:106.76px;font-size:11.7px;color:#3a3a3a;">Create</div>
<div class="t" style="left:1406.00px;width:800px;text-align:center;top:122.25px;font-size:11.7px;color:#3a3a3a;">a PDF</div>
<div class="t" style="left:1767.00px;top:145.56px;font-size:11.7px;color:#444444;">Adobe Acrobat</div>
<div class="r" style="left:1847.5px;top:68px;width:1px;height:88px;background:#c8c6c4;"></div>
<svg class="s" style="left:1900px;top:149px;" width="13" height="8" viewBox="0 0 13 8"><path d="M1.5 6.5 L6.5 1.5 L11.5 6.5" fill="none" stroke="#444" stroke-width="1.2"/></svg>
<div class="r" style="left:0px;top:161px;width:1920px;height:65px;background:#e6e6e6;"></div>
<div class="r" style="left:0px;top:160px;width:1920px;height:6px;background:linear-gradient(#d2d2d2,#e6e6e6);"></div>
<div class="r" style="left:5px;top:171px;width:101px;height:25px;background:#ffffff;box-shadow:inset 0 0 0 1px #cdcdcd;"></div>
<div class="t" style="left:12.00px;top:178.46px;font-size:12.4px;color:#333;">1R x 9C</div>
<svg class="s" style="left:92px;top:181px;" width="9" height="5" viewBox="0 0 9 5"><path d="M0 0 H8 L4 4.5 Z" fill="#777"/></svg>
<div class="r" style="left:122px;top:179px;width:2px;height:2px;background:#9a9a9a;"></div>
<div class="r" style="left:122px;top:184px;width:2px;height:2px;background:#9a9a9a;"></div>
<div class="r" style="left:122px;top:189px;width:2px;height:2px;background:#9a9a9a;"></div>
<div class="r" style="left:137px;top:171px;width:109px;height:25px;background:#ffffff;box-shadow:inset 0 0 0 1px #cdcdcd;"></div>
<svg class="s" style="left:148px;top:177px;" width="14" height="14" viewBox="0 0 14 14"><path d="M2 2 L12 12 M12 2 L2 12" stroke="#b6b6b6" stroke-width="1.3"/></svg>
<svg class="s" style="left:184px;top:177px;" width="16" height="14" viewBox="0 0 16 14"><path d="M1.5 7 L5.5 11.5 L14 2.5" fill="none" stroke="#b6b6b6" stroke-width="1.6"/></svg>
<div class="t" style="left:221.00px;top:176.75px;font-size:15px;color:#555;font-family:'Liberation Serif';"><i><b>f</b></i><span style="font-size:10px"><i><b>x</b></i></span></div>
<div class="r" style="left:250px;top:171px;width:1664px;height:46px;background:#ffffff;box-shadow:inset 0 0 0 1px #cdcdcd;"></div>
<div class="t" style="left:262.50px;top:177.71px;font-size:12.7px;color:#333;transform:scaleX(1.06);transform-origin:left 0;">Jumlah</div>
<svg class="s" style="left:1902px;top:179px;" width="10" height="7" viewBox="0 0 10 7"><path d="M1.5 5.5 L5 2 L8.5 5.5" fill="none" stroke="#666" stroke-width="1.6"/></svg>
<div class="r" style="left:0px;top:226px;width:1898px;height:20px;background:#e6e6e6;"></div>
<div class="r" style="left:26px;top:247px;width:1872px;height:735px;background:#ffffff;"></div>
<div class="r" style="left:89px;top:247px;width:1px;height:735px;background:#d4d4d4;"></div>
<div class="r" style="left:175px;top:247px;width:1px;height:735px;background:#d4d4d4;"></div>
<div class="r" style="left:306px;top:247px;width:1px;height:735px;background:#d4d4d4;"></div>
<div class="r" style="left:406px;top:247px;width:1px;height:735px;background:#d4d4d4;"></div>
<div class="r" style="left:537px;top:247px;width:1px;height:735px;background:#d4d4d4;"></div>
<div class="r" style="left:637px;top:247px;width:1px;height:735px;background:#d4d4d4;"></div>
<div class="r" style="left:744px;top:247px;width:1px;height:735px;background:#d4d4d4;"></div>
<div class="r" style="left:830px;top:247px;width:1px;height:735px;background:#d4d4d4;"></div>
<div class="r" style="left:961px;top:247px;width:1px;height:735px;background:#d4d4d4;"></div>
<div class="r" style="left:1054px;top:247px;width:1px;height:735px;background:#d4d4d4;"></div>
<div class="r" style="left:1198px;top:247px;width:1px;height:735px;background:#d4d4d4;"></div>
<div class="r" style="left:1291px;top:247px;width:1px;height:735px;background:#d4d4d4;"></div>
<div class="r" style="left:1422px;top:247px;width:1px;height:735px;background:#d4d4d4;"></div>
<div class="r" style="left:1522px;top:247px;width:1px;height:735px;background:#d4d4d4;"></div>
<div class="r" style="left:1652px;top:247px;width:1px;height:735px;background:#d4d4d4;"></div>
<div class="r" style="left:1754px;top:247px;width:1px;height:735px;background:#d4d4d4;"></div>
<div class="r" style="left:1818px;top:247px;width:1px;height:735px;background:#d4d4d4;"></div>
<div class="r" style="left:1882px;top:247px;width:1px;height:735px;background:#d4d4d4;"></div>
<div class="r" style="left:26px;top:266px;width:1872px;height:1px;background:#d4d4d4;"></div>
<div class="r" style="left:26px;top:286px;width:1872px;height:1px;background:#d4d4d4;"></div>
<div class="r" style="left:26px;top:306px;width:1872px;height:1px;background:#d4d4d4;"></div>
<div class="r" style="left:26px;top:326px;width:1872px;height:1px;background:#d4d4d4;"></div>
<div class="r" style="left:26px;top:346px;width:1872px;height:1px;background:#d4d4d4;"></div>
<div class="r" style="left:26px;top:366px;width:1872px;height:1px;background:#d4d4d4;"></div>
<div class="r" style="left:26px;top:386px;width:1872px;height:1px;background:#d4d4d4;"></div>
<div class="r" style="left:26px;top:406px;width:1872px;height:1px;background:#d4d4d4;"></div>
<div class="r" style="left:26px;top:426px;width:1872px;height:1px;background:#d4d4d4;"></div>
<div class="r" style="left:26px;top:446px;width:1872px;height:1px;background:#d4d4d4;"></div>
<div class="r" style="left:26px;top:466px;width:1872px;height:1px;background:#d4d4d4;"></div>
<div class="r" style="left:26px;top:486px;width:1872px;height:1px;background:#d4d4d4;"></div>
<div class="r" style="left:26px;top:506px;width:1872px;height:1px;background:#d4d4d4;"></div>
<div class="r" style="left:26px;top:526px;width:1872px;height:1px;background:#d4d4d4;"></div>
<div class="r" style="left:26px;top:546px;width:1872px;height:1px;background:#d4d4d4;"></div>
<div class="r" style="left:26px;top:566px;width:1872px;height:1px;background:#d4d4d4;"></div>
<div class="r" style="left:26px;top:586px;width:1872px;height:1px;background:#d4d4d4;"></div>
<div class="r" style="left:26px;top:606px;width:1872px;height:1px;background:#d4d4d4;"></div>
<div class="r" style="left:26px;top:626px;width:1872px;height:1px;background:#d4d4d4;"></div>
<div class="r" style="left:26px;top:646px;width:1872px;height:1px;background:#d4d4d4;"></div>
<div class="r" style="left:26px;top:666px;width:1872px;height:1px;background:#d4d4d4;"></div>
<div class="r" style="left:26px;top:686px;width:1872px;height:1px;background:#d4d4d4;"></div>
<div class="r" style="left:26px;top:706px;width:1872px;height:1px;background:#d4d4d4;"></div>
<div class="r" style="left:26px;top:726px;width:1872px;height:1px;background:#d4d4d4;"></div>
<div class="r" style="left:26px;top:746px;width:1872px;height:1px;background:#d4d4d4;"></div>
<div class="r" style="left:26px;top:766px;width:1872px;height:1px;background:#d4d4d4;"></div>
<div class="r" style="left:26px;top:786px;width:1872px;height:1px;background:#d4d4d4;"></div>
<div class="r" style="left:26px;top:806px;width:1872px;height:1px;background:#d4d4d4;"></div>
<div class="r" style="left:26px;top:826px;width:1872px;height:1px;background:#d4d4d4;"></div>
<div class="r" style="left:26px;top:846px;width:1872px;height:1px;background:#d4d4d4;"></div>
<div class="r" style="left:26px;top:866px;width:1872px;height:1px;background:#d4d4d4;"></div>
<div class="r" style="left:26px;top:886px;width:1872px;height:1px;background:#d4d4d4;"></div>
<div class="r" style="left:26px;top:906px;width:1872px;height:1px;background:#d4d4d4;"></div>
<div class="r" style="left:26px;top:926px;width:1872px;height:1px;background:#d4d4d4;"></div>
<div class="r" style="left:26px;top:946px;width:1872px;height:1px;background:#d4d4d4;"></div>
<div class="r" style="left:26px;top:966px;width:1872px;height:1px;background:#d4d4d4;"></div>
<div class="r" style="left:0px;top:247px;width:25px;height:735px;background:#e6e6e6;"></div>
<div class="r" style="left:0px;top:266px;width:25px;height:1px;background:#bebebe;"></div>
<div class="r" style="left:0px;top:286px;width:25px;height:1px;background:#bebebe;"></div>
<div class="r" style="left:0px;top:306px;width:25px;height:1px;background:#bebebe;"></div>
<div class="r" style="left:0px;top:326px;width:25px;height:1px;background:#bebebe;"></div>
<div class="r" style="left:0px;top:346px;width:25px;height:1px;background:#bebebe;"></div>
<div class="r" style="left:0px;top:366px;width:25px;height:1px;background:#bebebe;"></div>
<div class="r" style="left:0px;top:386px;width:25px;height:1px;background:#bebebe;"></div>
<div class="r" style="left:0px;top:406px;width:25px;height:1px;background:#bebebe;"></div>
<div class="r" style="left:0px;top:426px;width:25px;height:1px;background:#bebebe;"></div>
<div class="r" style="left:0px;top:446px;width:25px;height:1px;background:#bebebe;"></div>
<div class="r" style="left:0px;top:466px;width:25px;height:1px;background:#bebebe;"></div>
<div class="r" style="left:0px;top:486px;width:25px;height:1px;background:#bebebe;"></div>
<div class="r" style="left:0px;top:506px;width:25px;height:1px;background:#bebebe;"></div>
<div class="r" style="left:0px;top:526px;width:25px;height:1px;background:#bebebe;"></div>
<div class="r" style="left:0px;top:546px;width:25px;height:1px;background:#bebebe;"></div>
<div class="r" style="left:0px;top:566px;width:25px;height:1px;background:#bebebe;"></div>
<div class="r" style="left:0px;top:586px;width:25px;height:1px;background:#bebebe;"></div>
<div class="r" style="left:0px;top:606px;width:25px;height:1px;background:#bebebe;"></div>
<div class="r" style="left:0px;top:626px;width:25px;height:1px;background:#bebebe;"></div>
<div class="r" style="left:0px;top:646px;width:25px;height:1px;background:#bebebe;"></div>
<div class="r" style="left:0px;top:666px;width:25px;height:1px;background:#bebebe;"></div>
<div class="r" style="left:0px;top:686px;width:25px;height:1px;background:#bebebe;"></div>
<div class="r" style="left:0px;top:706px;width:25px;height:1px;background:#bebebe;"></div>
<div class="r" style="left:0px;top:726px;width:25px;height:1px;background:#bebebe;"></div>
<div class="r" style="left:0px;top:746px;width:25px;height:1px;background:#bebebe;"></div>
<div class="r" style="left:0px;top:766px;width:25px;height:1px;background:#bebebe;"></div>
<div class="r" style="left:0px;top:786px;width:25px;height:1px;background:#bebebe;"></div>
<div class="r" style="left:0px;top:806px;width:25px;height:1px;background:#bebebe;"></div>
<div class="r" style="left:0px;top:826px;width:25px;height:1px;background:#bebebe;"></div>
<div class="r" style="left:0px;top:846px;width:25px;height:1px;background:#bebebe;"></div>
<div class="r" style="left:0px;top:866px;width:25px;height:1px;background:#bebebe;"></div>
<div class="r" style="left:0px;top:886px;width:25px;height:1px;background:#bebebe;"></div>
<div class="r" style="left:0px;top:906px;width:25px;height:1px;background:#bebebe;"></div>
<div class="r" style="left:0px;top:926px;width:25px;height:1px;background:#bebebe;"></div>
<div class="r" style="left:0px;top:946px;width:25px;height:1px;background:#bebebe;"></div>
<div class="r" style="left:0px;top:966px;width:25px;height:1px;background:#bebebe;"></div>
<div class="r" style="left:25px;top:226px;width:1px;height:756px;background:#9f9f9f;"></div>
<div class="r" style="left:89px;top:230px;width:1px;height:16px;background:#c6c6c6;"></div>
<div class="r" style="left:175px;top:230px;width:1px;height:16px;background:#c6c6c6;"></div>
<div class="r" style="left:306px;top:230px;width:1px;height:16px;background:#c6c6c6;"></div>
<div class="r" style="left:406px;top:230px;width:1px;height:16px;background:#c6c6c6;"></div>
<div class="r" style="left:537px;top:230px;width:1px;height:16px;background:#c6c6c6;"></div>
<div class="r" style="left:637px;top:230px;width:1px;height:16px;background:#c6c6c6;"></div>
<div class="r" style="left:744px;top:230px;width:1px;height:16px;background:#c6c6c6;"></div>
<div class="r" style="left:830px;top:230px;width:1px;height:16px;background:#c6c6c6;"></div>
<div class="r" style="left:961px;top:230px;width:1px;height:16px;background:#c6c6c6;"></div>
<div class="r" style="left:1054px;top:230px;width:1px;height:16px;background:#c6c6c6;"></div>
<div class="r" style="left:1198px;top:230px;width:1px;height:16px;background:#c6c6c6;"></div>
<div class="r" style="left:1291px;top:230px;width:1px;height:16px;background:#c6c6c6;"></div>
<div class="r" style="left:1422px;top:230px;width:1px;height:16px;background:#c6c6c6;"></div>
<div class="r" style="left:1522px;top:230px;width:1px;height:16px;background:#c6c6c6;"></div>
<div class="r" style="left:1652px;top:230px;width:1px;height:16px;background:#c6c6c6;"></div>
<div class="r" style="left:1754px;top:230px;width:1px;height:16px;background:#c6c6c6;"></div>
<div class="r" style="left:1818px;top:230px;width:1px;height:16px;background:#c6c6c6;"></div>
<div class="r" style="left:1882px;top:230px;width:1px;height:16px;background:#c6c6c6;"></div>
<div class="r" style="left:0px;top:246px;width:1898px;height:1px;background:#9f9f9f;"></div>
<div class="r" style="left:745px;top:228px;width:1009px;height:18px;background:#d2d2d2;"></div>
<div class="r" style="left:830px;top:228px;width:1px;height:18px;background:#b8b8b8;"></div>
<div class="r" style="left:961px;top:228px;width:1px;height:18px;background:#b8b8b8;"></div>
<div class="r" style="left:1054px;top:228px;width:1px;height:18px;background:#b8b8b8;"></div>
<div class="r" style="left:1198px;top:228px;width:1px;height:18px;background:#b8b8b8;"></div>
<div class="r" style="left:1291px;top:228px;width:1px;height:18px;background:#b8b8b8;"></div>
<div class="r" style="left:1422px;top:228px;width:1px;height:18px;background:#b8b8b8;"></div>
<div class="r" style="left:1522px;top:228px;width:1px;height:18px;background:#b8b8b8;"></div>
<div class="r" style="left:1652px;top:228px;width:1px;height:18px;background:#b8b8b8;"></div>
<div class="r" style="left:744px;top:244px;width:1011px;height:2px;background:#217346;"></div>
<div class="r" style="left:0px;top:567px;width:25px;height:19px;background:#d2d2d2;"></div>
<div class="r" style="left:24px;top:566px;width:2px;height:21px;background:#217346;"></div>
<div class="t" style="left:-343.00px;width:800px;text-align:center;top:230.63px;font-size:12.2px;color:#222222;">E</div>
<div class="t" style="left:-268.00px;width:800px;text-align:center;top:230.63px;font-size:12.2px;color:#222222;">F</div>
<div class="t" style="left:-159.50px;width:800px;text-align:center;top:230.63px;font-size:12.2px;color:#222222;">G</div>
<div class="t" style="left:-44.00px;width:800px;text-align:center;top:230.63px;font-size:12.2px;color:#222222;">H</div>
<div class="t" style="left:71.50px;width:800px;text-align:center;top:230.63px;font-size:12.2px;color:#222222;">I</div>
<div class="t" style="left:187.00px;width:800px;text-align:center;top:230.63px;font-size:12.2px;color:#222222;">J</div>
<div class="t" style="left:290.50px;width:800px;text-align:center;top:230.63px;font-size:12.2px;color:#222222;">K</div>
<div class="t" style="left:387.00px;width:800px;text-align:center;top:230.63px;font-size:12.2px;color:#1e5d3a;">L</div>
<div class="t" style="left:495.50px;width:800px;text-align:center;top:230.63px;font-size:12.2px;color:#1e5d3a;">M</div>
<div class="t" style="left:607.50px;width:800px;text-align:center;top:230.63px;font-size:12.2px;color:#1e5d3a;">N</div>
<div class="t" style="left:726.00px;width:800px;text-align:center;top:230.63px;font-size:12.2px;color:#1e5d3a;">O</div>
<div class="t" style="left:844.50px;width:800px;text-align:center;top:230.63px;font-size:12.2px;color:#1e5d3a;">P</div>
<div class="t" style="left:956.50px;width:800px;text-align:center;top:230.63px;font-size:12.2px;color:#1e5d3a;">Q</div>
<div class="t" style="left:1072.00px;width:800px;text-align:center;top:230.63px;font-size:12.2px;color:#1e5d3a;">R</div>
<div class="t" style="left:1187.00px;width:800px;text-align:center;top:230.63px;font-size:12.2px;color:#1e5d3a;">S</div>
<div class="t" style="left:1303.00px;width:800px;text-align:center;top:230.63px;font-size:12.2px;color:#1e5d3a;">T</div>
<div class="t" style="left:1386.00px;width:800px;text-align:center;top:230.63px;font-size:12.2px;color:#222222;">U</div>
<div class="t" style="left:1450.00px;width:800px;text-align:center;top:230.63px;font-size:12.2px;color:#222222;">V</div>
<div class="t" style="left:-387.50px;width:800px;text-align:center;top:251.63px;font-size:12.2px;color:#222222;">1</div>
<div class="t" style="left:-387.50px;width:800px;text-align:center;top:271.63px;font-size:12.2px;color:#222222;">2</div>
<div class="t" style="left:-387.50px;width:800px;text-align:center;top:291.63px;font-size:12.2px;color:#222222;">3</div>
<div class="t" style="left:-387.50px;width:800px;text-align:center;top:311.63px;font-size:12.2px;color:#222222;">4</div>
<div class="t" style="left:-387.50px;width:800px;text-align:center;top:331.63px;font-size:12.2px;color:#222222;">5</div>
<div class="t" style="left:-387.50px;width:800px;text-align:center;top:351.63px;font-size:12.2px;color:#222222;">6</div>
<div class="t" style="left:-387.50px;width:800px;text-align:center;top:371.63px;font-size:12.2px;color:#222222;">7</div>
<div class="t" style="left:-387.50px;width:800px;text-align:center;top:391.63px;font-size:12.2px;color:#222222;">8</div>
<div class="t" style="left:-387.50px;width:800px;text-align:center;top:411.63px;font-size:12.2px;color:#222222;">9</div>
<div class="t" style="left:-387.50px;width:800px;text-align:center;top:431.63px;font-size:12.2px;color:#222222;">10</div>
<div class="t" style="left:-387.50px;width:800px;text-align:center;top:451.63px;font-size:12.2px;color:#222222;">11</div>
<div class="t" style="left:-387.50px;width:800px;text-align:center;top:471.63px;font-size:12.2px;color:#222222;">12</div>
<div class="t" style="left:-387.50px;width:800px;text-align:center;top:491.63px;font-size:12.2px;color:#222222;">13</div>
<div class="t" style="left:-387.50px;width:800px;text-align:center;top:511.63px;font-size:12.2px;color:#222222;">14</div>
<div class="t" style="left:-387.50px;width:800px;text-align:center;top:531.63px;font-size:12.2px;color:#222222;">15</div>
<div class="t" style="left:-387.50px;width:800px;text-align:center;top:551.63px;font-size:12.2px;color:#222222;">16</div>
<div class="t" style="left:-387.50px;width:800px;text-align:center;top:571.63px;font-size:12.2px;color:#1e5d3a;">17</div>
<div class="t" style="left:-387.50px;width:800px;text-align:center;top:591.63px;font-size:12.2px;color:#222222;">18</div>
<div class="t" style="left:-387.50px;width:800px;text-align:center;top:611.63px;font-size:12.2px;color:#222222;">19</div>
<div class="t" style="left:-387.50px;width:800px;text-align:center;top:631.63px;font-size:12.2px;color:#222222;">20</div>
<div class="t" style="left:-387.50px;width:800px;text-align:center;top:651.63px;font-size:12.2px;color:#222222;">21</div>
<div class="t" style="left:-387.50px;width:800px;text-align:center;top:671.63px;font-size:12.2px;color:#222222;">22</div>
<div class="t" style="left:-387.50px;width:800px;text-align:center;top:691.63px;font-size:12.2px;color:#222222;">23</div>
<div class="t" style="left:-387.50px;width:800px;text-align:center;top:711.63px;font-size:12.2px;color:#222222;">24</div>
<div class="t" style="left:-387.50px;width:800px;text-align:center;top:731.63px;font-size:12.2px;color:#222222;">25</div>
<div class="t" style="left:-387.50px;width:800px;text-align:center;top:751.63px;font-size:12.2px;color:#222222;">26</div>
<div class="t" style="left:-387.50px;width:800px;text-align:center;top:771.63px;font-size:12.2px;color:#222222;">27</div>
<div class="t" style="left:-387.50px;width:800px;text-align:center;top:791.63px;font-size:12.2px;color:#222222;">28</div>
<div class="t" style="left:-387.50px;width:800px;text-align:center;top:811.63px;font-size:12.2px;color:#222222;">29</div>
<div class="t" style="left:-387.50px;width:800px;text-align:center;top:831.63px;font-size:12.2px;color:#222222;">30</div>
<div class="t" style="left:-387.50px;width:800px;text-align:center;top:851.63px;font-size:12.2px;color:#222222;">31</div>
<div class="t" style="left:-387.50px;width:800px;text-align:center;top:871.63px;font-size:12.2px;color:#222222;">32</div>
<div class="t" style="left:-387.50px;width:800px;text-align:center;top:891.63px;font-size:12.2px;color:#222222;">33</div>
<div class="t" style="left:-387.50px;width:800px;text-align:center;top:911.63px;font-size:12.2px;color:#222222;">34</div>
<div class="t" style="left:-387.50px;width:800px;text-align:center;top:931.63px;font-size:12.2px;color:#222222;">35</div>
<div class="t" style="left:-387.50px;width:800px;text-align:center;top:951.63px;font-size:12.2px;color:#222222;">36</div>
<div class="t" style="left:-387.50px;width:800px;text-align:center;top:971.63px;font-size:12.2px;color:#222222;">37</div>
<svg class="s" style="left:6px;top:230px;" width="16" height="14" viewBox="0 0 16 14"><path d="M15 1 L15 13 L2 13 Z" fill="#bcbcbc"/></svg>
<div class="r" style="left:89px;top:266px;width:548px;height:320px;background:#ffffff;"></div>
<div class="r" style="left:89px;top:266px;width:548px;height:20px;background:#ED7D31;"></div>
<div class="r" style="left:89px;top:266px;width:549px;height:1px;background:#000;"></div>
<div class="r" style="left:89px;top:286px;width:549px;height:1px;background:#000;"></div>
<div class="r" style="left:175px;top:306px;width:463px;height:1px;background:#000;"></div>
<div class="r" style="left:89px;top:326px;width:549px;height:1px;background:#000;"></div>
<div class="r" style="left:89px;top:346px;width:549px;height:1px;background:#000;"></div>
<div class="r" style="left:89px;top:366px;width:549px;height:1px;background:#000;"></div>
<div class="r" style="left:89px;top:386px;width:549px;height:1px;background:#000;"></div>
<div class="r" style="left:89px;top:406px;width:549px;height:1px;background:#000;"></div>
<div class="r" style="left:89px;top:426px;width:549px;height:1px;background:#000;"></div>
<div class="r" style="left:89px;top:446px;width:549px;height:1px;background:#000;"></div>
<div class="r" style="left:89px;top:466px;width:549px;height:1px;background:#000;"></div>
<div class="r" style="left:89px;top:486px;width:549px;height:1px;background:#000;"></div>
<div class="r" style="left:89px;top:506px;width:549px;height:1px;background:#000;"></div>
<div class="r" style="left:89px;top:526px;width:549px;height:1px;background:#000;"></div>
<div class="r" style="left:89px;top:546px;width:549px;height:1px;background:#000;"></div>
<div class="r" style="left:89px;top:566px;width:549px;height:1px;background:#000;"></div>
<div class="r" style="left:89px;top:586px;width:549px;height:1px;background:#000;"></div>
<div class="r" style="left:89px;top:266px;width:1px;height:321px;background:#000;"></div>
<div class="r" style="left:637px;top:266px;width:1px;height:321px;background:#000;"></div>
<div class="r" style="left:175px;top:286px;width:1px;height:301px;background:#000;"></div>
<div class="r" style="left:406px;top:286px;width:1px;height:301px;background:#000;"></div>
<div class="r" style="left:306px;top:306px;width:1px;height:281px;background:#000;"></div>
<div class="r" style="left:537px;top:306px;width:1px;height:281px;background:#000;"></div>
<div class="t" style="left:-37.00px;width:800px;text-align:center;top:271.81px;font-size:12.7px;color:#000;font-weight:bold;">Rekapitulasi Penjualan Afiliasi CV PAS 2025</div>
<div class="t" style="left:-109.50px;width:800px;text-align:center;top:291.81px;font-size:12.7px;color:#000;font-weight:bold;">Vico</div>
<div class="t" style="left:121.50px;width:800px;text-align:center;top:291.81px;font-size:12.7px;color:#000;font-weight:bold;">Victor</div>
<div class="t" style="left:-268.00px;width:800px;text-align:center;top:311.81px;font-size:12.7px;color:#000;font-weight:bold;">Masa</div>
<div class="t" style="left:183.00px;top:311.81px;font-size:12.7px;color:#000;font-weight:bold;transform:scaleX(0.97);transform-origin:left 0;">Penghasilan Bruto</div>
<div class="t" style="left:314.00px;top:311.81px;font-size:12.7px;color:#000;font-weight:bold;transform:scaleX(0.97);transform-origin:left 0;">PPh 0,5%</div>
<div class="t" style="left:414.00px;top:311.81px;font-size:12.7px;color:#000;font-weight:bold;transform:scaleX(0.97);transform-origin:left 0;">Penghasilan Bruto</div>
<div class="t" style="left:545.00px;top:311.81px;font-size:12.7px;color:#000;font-weight:bold;transform:scaleX(0.97);transform-origin:left 0;">PPh 0,5%</div>
<div class="t" style="left:97.00px;top:331.81px;font-size:12.7px;color:#000;transform:scaleX(1.1);transform-origin:left 0;">Januari</div>
<div class="t" style="right:1636.00px;top:331.81px;font-size:12.7px;color:#000;">-</div>
<div class="t" style="right:1536.00px;top:331.81px;font-size:12.7px;color:#000;">-</div>
<div class="t" style="right:1405.00px;top:331.81px;font-size:12.7px;color:#000;">-</div>
<div class="t" style="right:1305.00px;top:331.81px;font-size:12.7px;color:#000;">-</div>
<div class="t" style="left:97.00px;top:351.81px;font-size:12.7px;color:#000;transform:scaleX(1.1);transform-origin:left 0;">Februari</div>
<div class="t" style="right:1636.00px;top:351.81px;font-size:12.7px;color:#000;">-</div>
<div class="t" style="right:1536.00px;top:351.81px;font-size:12.7px;color:#000;">-</div>
<div class="t" style="right:1405.00px;top:351.81px;font-size:12.7px;color:#000;">-</div>
<div class="t" style="right:1305.00px;top:351.81px;font-size:12.7px;color:#000;">-</div>
<div class="t" style="left:97.00px;top:371.81px;font-size:12.7px;color:#000;transform:scaleX(1.1);transform-origin:left 0;">Maret</div>
<div class="t" style="right:1636.00px;top:371.81px;font-size:12.7px;color:#000;">-</div>
<div class="t" style="right:1536.00px;top:371.81px;font-size:12.7px;color:#000;">-</div>
<div class="t" style="right:1405.00px;top:371.81px;font-size:12.7px;color:#000;">-</div>
<div class="t" style="right:1305.00px;top:371.81px;font-size:12.7px;color:#000;">-</div>
<div class="t" style="left:97.00px;top:391.81px;font-size:12.7px;color:#000;transform:scaleX(1.1);transform-origin:left 0;">April</div>
<div class="t" style="right:1636.00px;top:391.81px;font-size:12.7px;color:#000;">-</div>
<div class="t" style="right:1536.00px;top:391.81px;font-size:12.7px;color:#000;">-</div>
<div class="t" style="right:1405.00px;top:391.81px;font-size:12.7px;color:#000;">-</div>
<div class="t" style="right:1305.00px;top:391.81px;font-size:12.7px;color:#000;">-</div>
<div class="t" style="left:97.00px;top:411.81px;font-size:12.7px;color:#000;transform:scaleX(1.1);transform-origin:left 0;">Mei</div>
<div class="t" style="right:1636.00px;top:411.81px;font-size:12.7px;color:#000;">-</div>
<div class="t" style="right:1536.00px;top:411.81px;font-size:12.7px;color:#000;">-</div>
<div class="t" style="right:1405.00px;top:411.81px;font-size:12.7px;color:#000;">-</div>
<div class="t" style="right:1305.00px;top:411.81px;font-size:12.7px;color:#000;">-</div>
<div class="t" style="left:97.00px;top:431.81px;font-size:12.7px;color:#000;transform:scaleX(1.1);transform-origin:left 0;">Juni</div>
<div class="t" style="right:1636.00px;top:431.81px;font-size:12.7px;color:#000;">-</div>
<div class="t" style="right:1536.00px;top:431.81px;font-size:12.7px;color:#000;">-</div>
<div class="t" style="right:1405.00px;top:431.81px;font-size:12.7px;color:#000;">-</div>
<div class="t" style="right:1305.00px;top:431.81px;font-size:12.7px;color:#000;">-</div>
<div class="t" style="left:97.00px;top:451.81px;font-size:12.7px;color:#000;transform:scaleX(1.1);transform-origin:left 0;">Juli</div>
<div class="t" style="right:1621.00px;top:451.81px;font-size:12.7px;color:#000;">679.309.892,00</div>
<div class="t" style="right:1521.00px;top:451.81px;font-size:12.7px;color:#000;">896.549,46</div>
<div class="t" style="right:1390.00px;top:451.81px;font-size:12.7px;color:#000;">864.031.950,00</div>
<div class="t" style="right:1290.00px;top:451.81px;font-size:12.7px;color:#000;">1.820.159,75</div>
<div class="t" style="left:97.00px;top:471.81px;font-size:12.7px;color:#000;transform:scaleX(1.1);transform-origin:left 0;">Agustus</div>
<div class="t" style="right:1621.00px;top:471.81px;font-size:12.7px;color:#000;">569.224.898,00</div>
<div class="t" style="right:1521.00px;top:471.81px;font-size:12.7px;color:#000;">2.846.124,49</div>
<div class="t" style="right:1390.00px;top:471.81px;font-size:12.7px;color:#000;">301.189.950,00</div>
<div class="t" style="right:1290.00px;top:471.81px;font-size:12.7px;color:#000;">1.505.949,75</div>
<div class="t" style="left:97.00px;top:491.81px;font-size:12.7px;color:#000;transform:scaleX(1.1);transform-origin:left 0;">September</div>
<div class="t" style="right:1621.00px;top:491.81px;font-size:12.7px;color:#000;">400.861.810,00</div>
<div class="t" style="right:1521.00px;top:491.81px;font-size:12.7px;color:#000;">2.004.309,05</div>
<div class="t" style="right:1390.00px;top:491.81px;font-size:12.7px;color:#000;">608.574.714,00</div>
<div class="t" style="right:1290.00px;top:491.81px;font-size:12.7px;color:#000;">3.042.873,57</div>
<div class="t" style="left:97.00px;top:511.81px;font-size:12.7px;color:#000;transform:scaleX(1.1);transform-origin:left 0;">Oktober</div>
<div class="t" style="right:1621.00px;top:511.81px;font-size:12.7px;color:#000;">428.285.318,00</div>
<div class="t" style="right:1521.00px;top:511.81px;font-size:12.7px;color:#000;">2.141.426,59</div>
<div class="t" style="right:1390.00px;top:511.81px;font-size:12.7px;color:#000;">569.224.898,00</div>
<div class="t" style="right:1290.00px;top:511.81px;font-size:12.7px;color:#000;">2.846.124,49</div>
<div class="t" style="left:97.00px;top:531.81px;font-size:12.7px;color:#000;transform:scaleX(1.1);transform-origin:left 0;">November</div>
<div class="t" style="right:1621.00px;top:531.81px;font-size:12.7px;color:#000;">373.847.980,00</div>
<div class="t" style="right:1521.00px;top:531.81px;font-size:12.7px;color:#000;">1.869.239,90</div>
<div class="t" style="right:1390.00px;top:531.81px;font-size:12.7px;color:#000;">714.746.750,00</div>
<div class="t" style="right:1290.00px;top:531.81px;font-size:12.7px;color:#000;">3.573.733,75</div>
<div class="t" style="left:97.00px;top:551.81px;font-size:12.7px;color:#000;transform:scaleX(1.1);transform-origin:left 0;">Desember</div>
<div class="t" style="right:1621.00px;top:551.81px;font-size:12.7px;color:#000;">438.655.280,00</div>
<div class="t" style="right:1521.00px;top:551.81px;font-size:12.7px;color:#000;">2.193.276,40</div>
<div class="t" style="right:1390.00px;top:551.81px;font-size:12.7px;color:#000;">422.755.100,00</div>
<div class="t" style="right:1290.00px;top:551.81px;font-size:12.7px;color:#000;">2.113.775,50</div>
<div class="t" style="left:97.00px;top:571.81px;font-size:12.7px;color:#000;font-weight:bold;">Jumlah</div>
<div class="t" style="right:1621.00px;top:571.81px;font-size:12.7px;color:#000;font-weight:bold;">2.890.185.178,00</div>
<div class="t" style="right:1521.00px;top:571.81px;font-size:12.7px;color:#000;font-weight:bold;">11.950.925,89</div>
<div class="t" style="right:1390.00px;top:571.81px;font-size:12.7px;color:#000;font-weight:bold;">3.480.523.362,00</div>
<div class="t" style="right:1290.00px;top:571.81px;font-size:12.7px;color:#000;font-weight:bold;">14.902.616,81</div>
<svg class="s" style="left:407px;top:327px;" width="6" height="6" viewBox="0 0 6 6"><path d="M0 0 H6 L0 6 Z" fill="#1e7145"/></svg>
<svg class="s" style="left:407px;top:347px;" width="6" height="6" viewBox="0 0 6 6"><path d="M0 0 H6 L0 6 Z" fill="#1e7145"/></svg>
<svg class="s" style="left:407px;top:367px;" width="6" height="6" viewBox="0 0 6 6"><path d="M0 0 H6 L0 6 Z" fill="#1e7145"/></svg>
<svg class="s" style="left:407px;top:387px;" width="6" height="6" viewBox="0 0 6 6"><path d="M0 0 H6 L0 6 Z" fill="#1e7145"/></svg>
<svg class="s" style="left:407px;top:407px;" width="6" height="6" viewBox="0 0 6 6"><path d="M0 0 H6 L0 6 Z" fill="#1e7145"/></svg>
<svg class="s" style="left:407px;top:427px;" width="6" height="6" viewBox="0 0 6 6"><path d="M0 0 H6 L0 6 Z" fill="#1e7145"/></svg>
<svg class="s" style="left:407px;top:467px;" width="6" height="6" viewBox="0 0 6 6"><path d="M0 0 H6 L0 6 Z" fill="#1e7145"/></svg>
<svg class="s" style="left:407px;top:487px;" width="6" height="6" viewBox="0 0 6 6"><path d="M0 0 H6 L0 6 Z" fill="#1e7145"/></svg>
<svg class="s" style="left:407px;top:507px;" width="6" height="6" viewBox="0 0 6 6"><path d="M0 0 H6 L0 6 Z" fill="#1e7145"/></svg>
<svg class="s" style="left:407px;top:527px;" width="6" height="6" viewBox="0 0 6 6"><path d="M0 0 H6 L0 6 Z" fill="#1e7145"/></svg>
<svg class="s" style="left:407px;top:547px;" width="6" height="6" viewBox="0 0 6 6"><path d="M0 0 H6 L0 6 Z" fill="#1e7145"/></svg>
<svg class="s" style="left:307px;top:447px;" width="6" height="6" viewBox="0 0 6 6"><path d="M0 0 H6 L0 6 Z" fill="#1e7145"/></svg>
<svg class="s" style="left:538px;top:447px;" width="6" height="6" viewBox="0 0 6 6"><path d="M0 0 H6 L0 6 Z" fill="#1e7145"/></svg>
<div class="r" style="left:744px;top:266px;width:1010px;height:320px;background:#ffffff;"></div>
<div class="r" style="left:744px;top:266px;width:1010px;height:20px;background:#ED7D31;"></div>
<div class="r" style="left:831px;top:567px;width:923px;height:19px;background:#c9c9c9;"></div>
<div class="r" style="left:744px;top:266px;width:1011px;height:1px;background:#000;"></div>
<div class="r" style="left:744px;top:286px;width:1011px;height:1px;background:#000;"></div>
<div class="r" style="left:830px;top:306px;width:925px;height:1px;background:#000;"></div>
<div class="r" style="left:744px;top:326px;width:1011px;height:1px;background:#000;"></div>
<div class="r" style="left:744px;top:346px;width:1011px;height:1px;background:#000;"></div>
<div class="r" style="left:744px;top:366px;width:1011px;height:1px;background:#000;"></div>
<div class="r" style="left:744px;top:386px;width:1011px;height:1px;background:#000;"></div>
<div class="r" style="left:744px;top:406px;width:1011px;height:1px;background:#000;"></div>
<div class="r" style="left:744px;top:426px;width:1011px;height:1px;background:#000;"></div>
<div class="r" style="left:744px;top:446px;width:1011px;height:1px;background:#000;"></div>
<div class="r" style="left:744px;top:466px;width:1011px;height:1px;background:#000;"></div>
<div class="r" style="left:744px;top:486px;width:1011px;height:1px;background:#000;"></div>
<div class="r" style="left:744px;top:506px;width:1011px;height:1px;background:#000;"></div>
<div class="r" style="left:744px;top:526px;width:1011px;height:1px;background:#000;"></div>
<div class="r" style="left:744px;top:546px;width:1011px;height:1px;background:#000;"></div>
<div class="r" style="left:744px;top:566px;width:1011px;height:1px;background:#000;"></div>
<div class="r" style="left:744px;top:266px;width:1px;height:321px;background:#000;"></div>
<div class="r" style="left:1754px;top:266px;width:1px;height:321px;background:#000;"></div>
<div class="r" style="left:830px;top:286px;width:1px;height:301px;background:#000;"></div>
<div class="r" style="left:1291px;top:286px;width:1px;height:301px;background:#000;"></div>
<div class="r" style="left:961px;top:306px;width:1px;height:281px;background:#000;"></div>
<div class="r" style="left:1054px;top:306px;width:1px;height:281px;background:#000;"></div>
<div class="r" style="left:1198px;top:306px;width:1px;height:281px;background:#000;"></div>
<div class="r" style="left:1422px;top:306px;width:1px;height:281px;background:#000;"></div>
<div class="r" style="left:1522px;top:306px;width:1px;height:281px;background:#000;"></div>
<div class="r" style="left:1652px;top:306px;width:1px;height:281px;background:#000;"></div>
<div class="t" style="left:849.00px;width:800px;text-align:center;top:271.81px;font-size:12.7px;color:#000;font-weight:bold;">Rekapitulasi Penjualan 0,5% Afiliasi CV PAS 2025</div>
<div class="t" style="left:660.50px;width:800px;text-align:center;top:291.81px;font-size:12.7px;color:#000;font-weight:bold;">Vico</div>
<div class="t" style="left:1122.50px;width:800px;text-align:center;top:291.81px;font-size:12.7px;color:#000;font-weight:bold;">Victor</div>
<div class="t" style="left:387.00px;width:800px;text-align:center;top:311.81px;font-size:12.7px;color:#000;font-weight:bold;">Masa</div>
<div class="t" style="left:838.00px;top:311.81px;font-size:12.7px;color:#000;font-weight:bold;transform:scaleX(0.97);transform-origin:left 0;">Penghasilan Bruto</div>
<div class="t" style="left:969.00px;top:311.81px;font-size:12.7px;color:#000;font-weight:bold;transform:scaleX(0.97);transform-origin:left 0;">PPh 0,5%</div>
<div class="t" style="left:1062.00px;top:311.81px;font-size:12.7px;color:#000;font-weight:bold;transform:scaleX(0.97);transform-origin:left 0;">NTPN</div>
<div class="t" style="left:1206.00px;top:311.81px;font-size:12.7px;color:#000;font-weight:bold;transform:scaleX(0.97);transform-origin:left 0;">Tanggal Bayar</div>
<div class="t" style="left:1299.00px;top:311.81px;font-size:12.7px;color:#000;font-weight:bold;transform:scaleX(0.97);transform-origin:left 0;">Penghasilan Bruto</div>
<div class="t" style="left:1430.00px;top:311.81px;font-size:12.7px;color:#000;font-weight:bold;transform:scaleX(0.97);transform-origin:left 0;">PPh 0,5%</div>
<div class="t" style="left:1530.00px;top:311.81px;font-size:12.7px;color:#000;font-weight:bold;transform:scaleX(0.97);transform-origin:left 0;">NTPN</div>
<div class="t" style="left:1660.00px;top:311.81px;font-size:12.7px;color:#000;font-weight:bold;transform:scaleX(0.97);transform-origin:left 0;">Tanggal Bayar</div>
<div class="t" style="left:752.00px;top:331.81px;font-size:12.7px;color:#000;transform:scaleX(1.1);transform-origin:left 0;">Januari</div>
<div class="t" style="right:981.00px;top:331.81px;font-size:12.7px;color:#000;">-</div>
<div class="t" style="right:888.00px;top:331.81px;font-size:12.7px;color:#000;">-</div>
<div class="t" style="right:520.00px;top:331.81px;font-size:12.7px;color:#000;">-</div>
<div class="t" style="right:420.00px;top:331.81px;font-size:12.7px;color:#000;">-</div>
<div class="t" style="left:752.00px;top:351.81px;font-size:12.7px;color:#000;transform:scaleX(1.1);transform-origin:left 0;">Februari</div>
<div class="t" style="right:981.00px;top:351.81px;font-size:12.7px;color:#000;">-</div>
<div class="t" style="right:888.00px;top:351.81px;font-size:12.7px;color:#000;">-</div>
<div class="t" style="right:520.00px;top:351.81px;font-size:12.7px;color:#000;">-</div>
<div class="t" style="right:420.00px;top:351.81px;font-size:12.7px;color:#000;">-</div>
<div class="t" style="left:752.00px;top:371.81px;font-size:12.7px;color:#000;transform:scaleX(1.1);transform-origin:left 0;">Maret</div>
<div class="t" style="right:981.00px;top:371.81px;font-size:12.7px;color:#000;">-</div>
<div class="t" style="right:888.00px;top:371.81px;font-size:12.7px;color:#000;">-</div>
<div class="t" style="right:520.00px;top:371.81px;font-size:12.7px;color:#000;">-</div>
<div class="t" style="right:420.00px;top:371.81px;font-size:12.7px;color:#000;">-</div>
<div class="t" style="left:752.00px;top:391.81px;font-size:12.7px;color:#000;transform:scaleX(1.1);transform-origin:left 0;">April</div>
<div class="t" style="right:981.00px;top:391.81px;font-size:12.7px;color:#000;">-</div>
<div class="t" style="right:888.00px;top:391.81px;font-size:12.7px;color:#000;">-</div>
<div class="t" style="right:520.00px;top:391.81px;font-size:12.7px;color:#000;">-</div>
<div class="t" style="right:420.00px;top:391.81px;font-size:12.7px;color:#000;">-</div>
<div class="t" style="left:752.00px;top:411.81px;font-size:12.7px;color:#000;transform:scaleX(1.1);transform-origin:left 0;">Mei</div>
<div class="t" style="right:981.00px;top:411.81px;font-size:12.7px;color:#000;">-</div>
<div class="t" style="right:888.00px;top:411.81px;font-size:12.7px;color:#000;">-</div>
<div class="t" style="right:520.00px;top:411.81px;font-size:12.7px;color:#000;">-</div>
<div class="t" style="right:420.00px;top:411.81px;font-size:12.7px;color:#000;">-</div>
<div class="t" style="left:752.00px;top:431.81px;font-size:12.7px;color:#000;transform:scaleX(1.1);transform-origin:left 0;">Juni</div>
<div class="t" style="right:981.00px;top:431.81px;font-size:12.7px;color:#000;">-</div>
<div class="t" style="right:888.00px;top:431.81px;font-size:12.7px;color:#000;">-</div>
<div class="t" style="right:520.00px;top:431.81px;font-size:12.7px;color:#000;">-</div>
<div class="t" style="right:420.00px;top:431.81px;font-size:12.7px;color:#000;">-</div>
<div class="t" style="left:752.00px;top:451.81px;font-size:12.7px;color:#000;transform:scaleX(1.1);transform-origin:left 0;">Juli</div>
<div class="t" style="left:752.00px;top:471.81px;font-size:12.7px;color:#000;transform:scaleX(1.1);transform-origin:left 0;">Agustus</div>
<div class="t" style="right:966.00px;top:471.81px;font-size:12.7px;color:#000;">313.073.693,90</div>
<div class="t" style="right:873.00px;top:471.81px;font-size:12.7px;color:#000;">1.565.368,47</div>
<div class="t" style="right:505.00px;top:471.81px;font-size:12.7px;color:#000;">301.189.950,00</div>
<div class="t" style="right:405.00px;top:471.81px;font-size:12.7px;color:#000;">1.505.949,75</div>
<div class="t" style="left:1062.00px;top:471.81px;font-size:12.7px;color:#000;transform:scaleX(0.97);transform-origin:left 0;">BBA23015IFDMVUFI</div>
<div class="t" style="right:632.00px;top:471.81px;font-size:12.7px;color:#000;transform:scaleX(1.055);transform-origin:right 0;">15/10/2025</div>
<div class="t" style="left:1525.00px;top:471.81px;font-size:12.7px;color:#000;transform:scaleX(0.97);transform-origin:left 0;">51A446843LO2D2Q1</div>
<div class="t" style="right:169.00px;top:471.81px;font-size:12.7px;color:#000;transform:scaleX(1.055);transform-origin:right 0;">15/10/2025</div>
<div class="t" style="left:752.00px;top:491.81px;font-size:12.7px;color:#000;transform:scaleX(1.1);transform-origin:left 0;">September</div>
<div class="t" style="right:966.00px;top:491.81px;font-size:12.7px;color:#000;">300.646.357,50</div>
<div class="t" style="right:873.00px;top:491.81px;font-size:12.7px;color:#000;">1.503.231,79</div>
<div class="t" style="right:505.00px;top:491.81px;font-size:12.7px;color:#000;">304.287.357,00</div>
<div class="t" style="right:405.00px;top:491.81px;font-size:12.7px;color:#000;">1.521.436,79</div>
<div class="t" style="left:1062.00px;top:491.81px;font-size:12.7px;color:#000;transform:scaleX(0.97);transform-origin:left 0;">6BFA44F936821CIR</div>
<div class="t" style="right:632.00px;top:491.81px;font-size:12.7px;color:#000;transform:scaleX(1.055);transform-origin:right 0;">15/10/2025</div>
<div class="t" style="left:1525.00px;top:491.81px;font-size:12.7px;color:#000;transform:scaleX(0.97);transform-origin:left 0;">C3C251Q0IOIA7UV2</div>
<div class="t" style="right:169.00px;top:491.81px;font-size:12.7px;color:#000;transform:scaleX(1.055);transform-origin:right 0;">15/10/2025</div>
<div class="t" style="left:752.00px;top:511.81px;font-size:12.7px;color:#000;transform:scaleX(1.1);transform-origin:left 0;">Oktober</div>
<div class="t" style="right:966.00px;top:511.81px;font-size:12.7px;color:#000;">278.385.456,70</div>
<div class="t" style="right:873.00px;top:511.81px;font-size:12.7px;color:#000;">1.391.927,28</div>
<div class="t" style="right:505.00px;top:511.81px;font-size:12.7px;color:#000;">313.073.693,90</div>
<div class="t" style="right:405.00px;top:511.81px;font-size:12.7px;color:#000;">1.565.368,47</div>
<div class="t" style="left:1062.00px;top:511.81px;font-size:12.7px;color:#000;transform:scaleX(0.97);transform-origin:left 0;">738511Q0MIC6A3UV</div>
<div class="t" style="right:632.00px;top:511.81px;font-size:12.7px;color:#000;transform:scaleX(1.055);transform-origin:right 0;">11/11/2025</div>
<div class="t" style="left:1525.00px;top:511.81px;font-size:12.7px;color:#000;transform:scaleX(0.97);transform-origin:left 0;">B47152ME5AQI31OL</div>
<div class="t" style="right:169.00px;top:511.81px;font-size:12.7px;color:#000;transform:scaleX(1.055);transform-origin:right 0;">11/11/2025</div>
<div class="t" style="left:752.00px;top:531.81px;font-size:12.7px;color:#000;transform:scaleX(1.1);transform-origin:left 0;">November</div>
<div class="t" style="right:966.00px;top:531.81px;font-size:12.7px;color:#000;">299.078.384,00</div>
<div class="t" style="right:873.00px;top:531.81px;font-size:12.7px;color:#000;">1.495.391,92</div>
<div class="t" style="right:505.00px;top:531.81px;font-size:12.7px;color:#000;">321.636.037,50</div>
<div class="t" style="right:405.00px;top:531.81px;font-size:12.7px;color:#000;">1.608.180,19</div>
<div class="t" style="left:1057.00px;top:531.81px;font-size:12.7px;color:#000;transform:scaleX(0.985);transform-origin:left 0;">640105588752372</div>
<div class="t" style="right:632.00px;top:531.81px;font-size:12.7px;color:#000;transform:scaleX(1.055);transform-origin:right 0;">09/12/2025</div>
<div class="t" style="left:1525.00px;top:531.81px;font-size:12.7px;color:#000;transform:scaleX(0.97);transform-origin:left 0;">06DB31Q0PLGBTUBA</div>
<div class="t" style="right:169.00px;top:531.81px;font-size:12.7px;color:#000;transform:scaleX(1.055);transform-origin:right 0;">09/12/2025</div>
<div class="t" style="left:752.00px;top:551.81px;font-size:12.7px;color:#000;transform:scaleX(1.1);transform-origin:left 0;">Desember</div>
<div class="t" style="right:966.00px;top:551.81px;font-size:12.7px;color:#000;">438.655.280,00</div>
<div class="t" style="right:873.00px;top:551.81px;font-size:12.7px;color:#000;">2.193.276,40</div>
<div class="t" style="right:505.00px;top:551.81px;font-size:12.7px;color:#000;">422.755.100,00</div>
<div class="t" style="right:405.00px;top:551.81px;font-size:12.7px;color:#000;">2.113.775,50</div>
<div class="t" style="left:1062.00px;top:551.81px;font-size:12.7px;color:#000;transform:scaleX(0.97);transform-origin:left 0;">5A8EA3IRRE3QN1MI</div>
<div class="t" style="right:632.00px;top:551.81px;font-size:12.7px;color:#000;transform:scaleX(1.055);transform-origin:right 0;">13/01/2026</div>
<div class="t" style="left:1525.00px;top:551.81px;font-size:12.7px;color:#000;transform:scaleX(0.97);transform-origin:left 0;">B4EAA4F9C6K7SC5V</div>
<div class="t" style="right:169.00px;top:551.81px;font-size:12.7px;color:#000;transform:scaleX(1.055);transform-origin:right 0;">15/01/2025</div>
<div class="t" style="left:752.00px;top:571.81px;font-size:12.7px;color:#000;transform:scaleX(1.05);transform-origin:left 0;">Jumlah</div>
<div class="t" style="right:966.00px;top:571.81px;font-size:12.7px;color:#000;">1.629.839.172,10</div>
<div class="t" style="right:873.00px;top:571.81px;font-size:12.7px;color:#000;">8.149.195,86</div>
<div class="t" style="right:505.00px;top:571.81px;font-size:12.7px;color:#000;">1.662.942.138,40</div>
<div class="t" style="right:405.00px;top:571.81px;font-size:12.7px;color:#000;">8.314.710,69</div>
<svg class="s" style="left:1055px;top:527px;" width="6" height="6" viewBox="0 0 6 6"><path d="M0 0 H6 L0 6 Z" fill="#1e7145"/></svg>
<svg class="s" style="left:1192px;top:527px;" width="6" height="6" viewBox="0 0 6 6"><path d="M0 0 H6 V6 Z" fill="#e0101a"/></svg>
<div class="r" style="left:743px;top:565px;width:1013px;height:2px;background:#1f6b43;"></div>
<div class="r" style="left:743px;top:586px;width:1008px;height:2px;background:#1f6b43;"></div>
<div class="r" style="left:743px;top:565px;width:2px;height:23px;background:#1f6b43;"></div>
<div class="r" style="left:1754px;top:565px;width:2px;height:19px;background:#1f6b43;"></div>
<div class="r" style="left:1751px;top:584px;width:6px;height:6px;background:#1f6b43;outline:1px solid #fff;"></div>
<svg class="s" style="left:641px;top:590px;" width="24" height="24" viewBox="0 0 24 24"><rect x="0.5" y="0.5" width="23" height="23" fill="#fff" stroke="#5d6f68"/><path d="M12 4.5 H20.5 V17.5 H4.5 V13" fill="none" stroke="#333" stroke-width="1.2"/><rect x="8" y="12" width="9" height="3.5" fill="none" stroke="#333" stroke-width="1.1"/><path d="M9 3 L5 8 L8 8 L5.5 12.5 L11 7 L8.5 7 L10.5 3 Z" fill="#f0a030"/></svg>
<div class="r" style="left:1898px;top:226px;width:22px;height:756px;background:#e6e6e6;"></div>
<div class="r" style="left:1898px;top:247px;width:1px;height:735px;background:#9f9f9f;"></div>
<div class="r" style="left:1902px;top:229px;width:15px;height:16px;background:#ffffff;box-shadow:inset 0 0 0 1px #9a9a9a;"></div>
<svg class="s" style="left:1905px;top:233px;" width="9" height="6" viewBox="0 0 9 6"><path d="M0 5 L4.5 0 L9 5 Z" fill="#222"/></svg>
<div class="r" style="left:1902px;top:244px;width:15px;height:703px;background:#ffffff;box-shadow:inset 0 0 0 1px #9a9a9a;"></div>
<div class="r" style="left:1902px;top:244px;width:15px;height:2px;background:#9a9a9a;"></div>
<div class="r" style="left:1902px;top:968px;width:15px;height:14px;background:#ffffff;box-shadow:inset 0 0 0 1px #9a9a9a;"></div>
<svg class="s" style="left:1905px;top:973px;" width="9" height="6" viewBox="0 0 9 6"><path d="M0 0 L9 0 L4.5 5 Z" fill="#222"/></svg>
<div class="r" style="left:0px;top:982px;width:1898px;height:1px;background:#9f9f9f;"></div>
<div class="r" style="left:0px;top:983px;width:1920px;height:27px;background:#e6e6e6;"></div>
<div class="r" style="left:0px;top:1010px;width:1920px;height:1px;background:#cbc8c8;"></div>
<svg class="s" style="left:24px;top:990px;" width="10" height="10" viewBox="0 0 10 10"><path d="M7 1 L2 5 L7 9 Z" fill="#c0c0c0"/></svg>
<svg class="s" style="left:53px;top:990px;" width="10" height="10" viewBox="0 0 10 10"><path d="M3 1 L8 5 L3 9 Z" fill="#c0c0c0"/></svg>
<div class="r" style="left:100px;top:986px;width:1px;height:19px;background:#b4b4b4;"></div>
<div class="r" style="left:177px;top:986px;width:1px;height:19px;background:#b4b4b4;"></div>
<div class="r" style="left:276px;top:986px;width:1px;height:19px;background:#b4b4b4;"></div>
<div class="r" style="left:357px;top:986px;width:1px;height:19px;background:#b4b4b4;"></div>
<div class="r" style="left:457px;top:986px;width:1px;height:19px;background:#b4b4b4;"></div>
<div class="r" style="left:591px;top:986px;width:1px;height:19px;background:#b4b4b4;"></div>
<div class="t" style="left:114.00px;top:991.09px;font-size:11.9px;color:#3b3b3b;">BRI KBA</div>
<div class="t" style="left:191.00px;top:991.09px;font-size:11.9px;color:#3b3b3b;">BRI VICTOR</div>
<div class="t" style="left:290.00px;top:991.09px;font-size:11.9px;color:#3b3b3b;">MANDIRI</div>
<div class="t" style="left:371.50px;top:991.09px;font-size:11.9px;color:#3b3b3b;">PEMBELIAN</div>
<div class="t" style="left:472.30px;top:991.09px;font-size:11.9px;color:#3b3b3b;">PENJUALAN VICO</div>
<div class="t" style="left:607.00px;top:991.09px;font-size:11.9px;color:#3b3b3b;">PENJUALAN VICTOR</div>
<div class="r" style="left:742px;top:982px;width:71px;height:24px;background:#ffffff;"></div>
<div class="r" style="left:742px;top:1004px;width:71px;height:2px;background:#217346;"></div>
<div class="r" style="left:742px;top:982px;width:1px;height:24px;background:#c0c0c0;"></div>
<div class="r" style="left:812px;top:982px;width:1px;height:24px;background:#c0c0c0;"></div>
<div class="t" style="left:377.50px;width:800px;text-align:center;top:990.13px;font-size:12.2px;color:#1e6e42;font-weight:bold;">Resume</div>
<svg class="s" style="left:845px;top:986px;" width="18" height="18" viewBox="0 0 18 18"><circle cx="9" cy="9" r="7.5" fill="none" stroke="#666" stroke-width="1.1"/><path d="M9 5 V13 M5 9 H13" stroke="#555" stroke-width="1.4"/></svg>
<div class="r" style="left:1152px;top:991px;width:2px;height:2px;background:#a0a0a0;"></div>
<div class="r" style="left:1152px;top:996px;width:2px;height:2px;background:#a0a0a0;"></div>
<div class="r" style="left:1152px;top:1001px;width:2px;height:2px;background:#a0a0a0;"></div>
<div class="r" style="left:1169px;top:989px;width:15px;height:15px;background:#ffffff;box-shadow:inset 0 0 0 1px #9a9a9a;"></div>
<svg class="s" style="left:1173px;top:992px;" width="8" height="9" viewBox="0 0 8 9"><path d="M6 0 L6 9 L1 4.5 Z" fill="#222"/></svg>
<div class="r" style="left:1184px;top:990px;width:128px;height:13px;background:#f0f0f0;"></div>
<div class="r" style="left:1312px;top:989px;width:572px;height:15px;background:#ffffff;box-shadow:inset 0 0 0 1px #9a9a9a;"></div>
<div class="r" style="left:1884px;top:989px;width:15px;height:15px;background:#ffffff;box-shadow:inset 0 0 0 1px #9a9a9a;"></div>
<div class="r" style="left:1884px;top:989px;width:2px;height:15px;background:#9a9a9a;"></div>
<svg class="s" style="left:1888px;top:992px;" width="8" height="9" viewBox="0 0 8 9"><path d="M2 0 L2 9 L7 4.5 Z" fill="#222"/></svg>
<div class="r" style="left:0px;top:1011px;width:1920px;height:21px;background:#f3f1f0;"></div>
<div class="r" style="left:0px;top:1032px;width:1920px;height:1px;background:#b8bac4;"></div>
<div class="t" style="left:8.30px;top:1015.14px;font-size:11.6px;color:#444;transform:scaleX(0.93);transform-origin:left 0;">Ready</div>
<svg class="s" style="left:57px;top:1013px;" width="16" height="16" viewBox="0 0 16 16"><rect x="1.5" y="2.5" width="12" height="10" fill="none" stroke="#444" stroke-width="1"/><path d="M1.5 5 H13.5" stroke="#444"/><circle cx="10.5" cy="10.5" r="3.3" fill="#f3f2f1" stroke="#444"/><circle cx="10.5" cy="10.5" r="1.5" fill="#444"/><path d="M3.5 7.5 H6 M3.5 10 H6" stroke="#444"/></svg>
<svg class="s" style="left:89px;top:1012px;" width="16" height="17" viewBox="0 0 16 17"><circle cx="7" cy="3" r="1.8" fill="none" stroke="#444"/><path d="M1.5 6 L7 7 L12.5 6 M7 7 V10.5 L4 15.5 M7 10.5 L9 13" fill="none" stroke="#444" stroke-width="1.1"/><path d="M9.5 11.5 L14.5 16.5 M14.5 11.5 L9.5 16.5" stroke="#444" stroke-width="1.1"/></svg>
<div class="t" style="left:108.30px;top:1015.44px;font-size:11.25px;color:#444;">Accessibility: Investigate</div>
<div class="t" style="left:1277.30px;top:1015.65px;font-size:11.0px;color:#4a4a4a;">Average:&nbsp; 827.311.304,26</div>
<div class="t" style="left:1427.00px;top:1015.65px;font-size:11.0px;color:#4a4a4a;">Count: 5</div>
<div class="t" style="left:1487.00px;top:1015.65px;font-size:11.0px;color:#4a4a4a;">Sum:&nbsp; 3.309.245.217,05</div>
<div class="r" style="left:1620px;top:1011px;width:40px;height:21px;background:#d4d4d4;"></div>
<svg class="s" style="left:1631px;top:1013px;" width="16" height="16" viewBox="0 0 16 16"><rect x="1.5" y="1.5" width="13" height="13" fill="none" stroke="#444"/><path d="M1.5 5.8 H14.5 M1.5 10.2 H14.5 M5.8 1.5 V14.5 M10.2 1.5 V14.5" stroke="#444"/></svg>
<svg class="s" style="left:1672px;top:1013px;" width="16" height="16" viewBox="0 0 16 16"><rect x="1.5" y="1.5" width="13" height="13" fill="none" stroke="#444"/><rect x="4.5" y="3.5" width="7" height="9" fill="none" stroke="#444"/><path d="M6 6 H10 M6 8 H10 M6 10 H10" stroke="#444"/></svg>
<svg class="s" style="left:1712px;top:1013px;" width="16" height="16" viewBox="0 0 16 16"><rect x="1.5" y="1.5" width="13" height="13" fill="none" stroke="#444"/><path d="M7.5 1.5 V8.5 H1.5" fill="none" stroke="#444"/></svg>
<div class="r" style="left:1746px;top:1020px;width:8px;height:1px;background:#555;"></div>
<div class="r" style="left:1759px;top:1020px;width:98px;height:1px;background:#777;"></div>
<div class="r" style="left:1806px;top:1014px;width:5px;height:13px;background:#444;"></div>
<div class="r" style="left:1863px;top:1020px;width:9px;height:1px;background:#555;"></div>
<div class="r" style="left:1867px;top:1016px;width:1px;height:9px;background:#555;"></div>
<div class="t" style="left:1885.00px;top:1015.48px;font-size:11.2px;color:#444;">100%</div>
<div class="r" style="left:0px;top:1033px;width:1920px;height:47px;background:linear-gradient(90deg,#d3d9e6 0%,#d5dcef 22%,#d8dff6 33%,#d6ddf0 45%,#d4dae8 60%,#d3d9e5 100%);"></div>
<svg class="s" style="left:16px;top:1046px;" width="30" height="22" viewBox="0 0 30 22"><path d="M6 20 C1 20 1 13 6 13 C7 8 14 7 16 11 C20 9 24 12 23 16 C27 16 27 20 23 20 Z" fill="#cfe2f7" stroke="#9fc1e6" stroke-width="1"/></svg>
<svg class="s" style="left:29px;top:1037px;" width="18" height="18" viewBox="0 0 18 18"><circle cx="9" cy="9" r="8.3" fill="#c42b1c"/><text x="9" y="13.2" font-size="11.5" fill="#fff" text-anchor="middle" font-family="Liberation Sans">2</text></svg>
<div class="t" style="left:50.00px;top:1041.84px;font-size:11.6px;color:#1a1a1a;">30°C</div>
<div class="t" style="left:50.00px;top:1058.14px;font-size:11.6px;color:#444;">Berawan</div>
<svg class="s" style="left:595px;top:1045px;" width="23" height="23" viewBox="0 0 23 23"><defs><linearGradient id="wg" x1="0" y1="0" x2="1" y2="1"><stop offset="0" stop-color="#3fb4f5"/><stop offset="1" stop-color="#0a6fd4"/></linearGradient></defs><rect x="0" y="0" width="10.8" height="10.8" fill="url(#wg)"/><rect x="12.2" y="0" width="10.8" height="10.8" fill="url(#wg)"/><rect x="0" y="12.2" width="10.8" height="10.8" fill="url(#wg)"/><rect x="12.2" y="12.2" width="10.8" height="10.8" fill="url(#wg)"/></svg>
<div class="r" style="left:632px;top:1041px;width:218px;height:30px;background:#f3f5fb;border-radius:15px;box-shadow:0 0 0 1px #dfe3ec;"></div>
<svg class="s" style="left:642px;top:1047px;" width="17" height="18" viewBox="0 0 17 18"><circle cx="7" cy="7.3" r="5.6" fill="none" stroke="#1a1a1a" stroke-width="1.7"/><path d="M11 11.5 L15 15.8" stroke="#1a1a1a" stroke-width="1.8"/></svg>
<div class="t" style="left:668.20px;top:1050.66px;font-size:12.4px;color:#555;">Search</div>
<svg class="s" style="left:800px;top:1042px;" width="48" height="30" viewBox="0 0 48 30"><ellipse cx="24" cy="26" rx="22" ry="2.2" fill="#e6d0b0" opacity="0.85"/><path d="M3 9.5 L6 4 L10 2 L12 5 L17 10 L30 9 C35 9 36 12 35 16 L34 25 M31 16 L31 25 M18 16 L17 25 M21 16 L21 25" fill="none" stroke="#6a6a75" stroke-width="1.6" stroke-linecap="round"/><path d="M4 9 L7 4 L11 3 L16 10 L16 16 L33 16 L35 12 C35 9 32 9 30 9 L17 10 L12 5 Z" fill="#ecebf2"/><path d="M6 5 L8 9 M9 4 L11 8 M12 6 L14 11 M15 9 L17 16 M19 10 L20 16 M22 10 L23 16 M25 10 L26 16 M28 9 L29 16 M31 10 L32 15" stroke="#2f2f3a" stroke-width="1.2"/><path d="M34 10 C37 12 37 17 39 21" fill="none" stroke="#2a2a40" stroke-width="1.6"/><path d="M3 9.5 L5 10.5" stroke="#222" stroke-width="1.8"/></svg>
<svg class="s" style="left:862px;top:1044px;" width="26" height="25" viewBox="0 0 26 25"><rect x="7" y="1" width="17" height="16" fill="#f7f7f7" stroke="#e6e6e6"/><rect x="1.5" y="7" width="17" height="16" rx="1.5" fill="#262a2c"/><rect x="7" y="7" width="11.5" height="10" fill="#c8c8c4"/></svg>
<svg class="s" style="left:906px;top:1043px;" width="26" height="26" viewBox="0 0 26 26"><path d="M13 1.5 C6.5 1.5 1.5 6.5 1.5 12.8 C1.5 15 2.2 17 3.3 18.7 L1.8 24 L7.3 22.6 C9 23.6 11 24.2 13 24.2 C19.5 24.2 24.5 19.2 24.5 12.8 C24.5 6.5 19.5 1.5 13 1.5 Z" fill="#fff" stroke="#25a244" stroke-width="2.2"/><path d="M8.5 8 C8 9 8 11 10 14 C12 17 15 18.5 17 18.2 C18 18 18.5 17 18.3 16.3 L16 15 L14.8 16 C13 15.2 11.5 13.7 10.7 12 L11.7 10.8 L10.5 8 Z" fill="#25a244"/></svg>
<div class="r" style="left:915px;top:1072px;width:8px;height:3px;background:#7a7f8a;border-radius:2px;"></div>
<svg class="s" style="left:950px;top:1043px;" width="27" height="27" viewBox="0 0 27 27"><defs><linearGradient id="eg1" x1="0" y1="0.3" x2="0.4" y2="1"><stop offset="0" stop-color="#118ce0"/><stop offset="0.6" stop-color="#0b62c8"/><stop offset="1" stop-color="#173a8c"/></linearGradient><linearGradient id="eg2" x1="0" y1="0" x2="1" y2="0.8"><stop offset="0" stop-color="#1fb5e6"/><stop offset="0.6" stop-color="#36cfa0"/><stop offset="1" stop-color="#5ad86a"/></linearGradient></defs><circle cx="13.2" cy="13" r="12.3" fill="url(#eg1)"/><path d="M1.2 11.5 C2 4.5 7.5 0.7 13.2 0.7 C20 0.7 25.5 6.2 25.5 12.5 C25.5 16.5 22.5 19.3 18.5 19 C16.5 18.8 15 18 14.5 17.2 C17.5 15.5 17.5 9.5 12.3 9 C7 8.6 3.5 10.5 1.2 11.5 Z" fill="url(#eg2)"/><path d="M14.5 17.2 C11.5 17.8 9.3 15.5 9.6 12.8 C9.9 10.7 11.3 9.4 12.8 9.2 C10.8 11 11.2 15.3 14.5 17.2 Z" fill="#d9e4f5"/></svg>
<svg class="s" style="left:993px;top:1044px;" width="28" height="24" viewBox="0 0 28 24"><path d="M1.5 2.5 C1.5 1.5 2.5 1 3.5 1 H9 L11.5 3.5 H25 C26 3.5 26.5 4 26.5 5 V21 C26.5 22 26 22.5 25 22.5 H3 C2 22.5 1.5 22 1.5 21 Z" fill="#f2b81e"/><rect x="1.5" y="5.5" width="25" height="17" rx="1.2" fill="#ffd54a"/><path d="M7 22.5 V16.5 C7 15.5 7.5 15 8.5 15 H19.5 C20.5 15 21 15.5 21 16.5 V22.5 Z" fill="#1a73d0"/></svg>
<div class="r" style="left:1003px;top:1072px;width:8px;height:3px;background:#7a7f8a;border-radius:2px;"></div>
<svg class="s" style="left:1038px;top:1043px" width="26" height="26" viewBox="0 0 26 26"><circle cx="13" cy="13" r="12" fill="#db4437"/><path d="M13 13 L2.6 19 A12 12 0 0 0 19 23.4 Z" fill="#0f9d58"/><path d="M13 13 L19 23.4 A12 12 0 0 0 24.4 8 Z" fill="#ffcd40"/><circle cx="13" cy="13" r="5.3" fill="#fff"/><circle cx="13" cy="13" r="4.2" fill="#4285f4"/></svg>
<svg class="s" style="left:1052px;top:1039px;" width="14" height="14" viewBox="0 0 14 14"><circle cx="7" cy="7" r="6.5" fill="#b52424" stroke="#fff"/><circle cx="7" cy="6" r="2.5" fill="#f0d0c0"/></svg>
<div class="r" style="left:1047px;top:1072px;width:8px;height:3px;background:#7a7f8a;border-radius:2px;"></div>
<svg class="s" style="left:1082px;top:1043px;" width="26" height="26" viewBox="0 0 26 26"><circle cx="13" cy="13" r="12" fill="#1ed760"/><path d="M6 9.5 C10 8 16 8 20.5 10.5 M7 13.2 C10.5 12 15.5 12.3 19 14.2 M8 16.6 C11 15.8 14.5 16 17 17.4" fill="none" stroke="#111" stroke-width="2" stroke-linecap="round"/></svg>
<div class="r" style="left:1091px;top:1072px;width:8px;height:3px;background:#7a7f8a;border-radius:2px;"></div>
<svg class="s" style="left:1126px;top:1043px;" width="26" height="27" viewBox="0 0 26 27"><rect x="1" y="1" width="14" height="14" fill="#fff" stroke="#ddd"/><path d="M2 2 H14 V14" fill="none" stroke="#d33" stroke-width="2.2" stroke-dasharray="2.5 1.5"/><path d="M13 8 L13 22 M13 16 L22 14" stroke="#888" stroke-width="1.6"/><circle cx="13" cy="23" r="2.2" fill="none" stroke="#2a8ae0" stroke-width="1.6"/><circle cx="23" cy="13.5" r="2.2" fill="none" stroke="#2a8ae0" stroke-width="1.6"/></svg>
<svg class="s" style="left:1171px;top:1043px;" width="26" height="26" viewBox="0 0 26 26"><circle cx="13" cy="13" r="12" fill="#e6344a"/><path d="M8 19 L13 6 L18 19" fill="none" stroke="#fff" stroke-width="2.4" stroke-linejoin="round"/></svg>
<div class="r" style="left:1208px;top:1037px;width:34px;height:38px;background:#e6eaf4;border-radius:4px;"></div>
<svg class="s" style="left:1214px;top:1044px;" width="26" height="24" viewBox="0 0 26 24"><rect x="8" y="1" width="17" height="22" fill="#107c41" rx="1.5"/><rect x="8" y="1" width="17" height="7" fill="#33c481"/><rect x="8" y="8" width="17" height="8" fill="#21a366"/><rect x="16" y="1" width="9" height="22" fill="#185c37" opacity="0.35"/><rect x="1" y="6" width="13" height="12" fill="#107c41" rx="1.5"/><path d="M4.5 9 L10.5 15 M10.5 9 L4.5 15" stroke="#fff" stroke-width="1.8"/></svg>
<div class="r" style="left:1220px;top:1072px;width:15px;height:3px;background:#1a73d0;border-radius:2px;"></div>
<svg class="s" style="left:1258px;top:1043px" width="26" height="26" viewBox="0 0 26 26"><circle cx="13" cy="13" r="12" fill="#db4437"/><path d="M13 13 L2.6 19 A12 12 0 0 0 19 23.4 Z" fill="#0f9d58"/><path d="M13 13 L19 23.4 A12 12 0 0 0 24.4 8 Z" fill="#ffcd40"/><circle cx="13" cy="13" r="5.3" fill="#fff"/><circle cx="13" cy="13" r="4.2" fill="#4285f4"/></svg>
<svg class="s" style="left:1270px;top:1040px;" width="12" height="12" viewBox="0 0 12 12"><path d="M2 2 L10 10 M10 2 L2 10" stroke="#666" stroke-width="1.4"/></svg>
<svg class="s" style="left:1303px;top:1044px;" width="23" height="23" viewBox="0 0 23 23"><rect x="0.5" y="0.5" width="22" height="22" rx="4" fill="#b30b00"/><path d="M5 17 C8 12 10 7 10.5 4.5 C11 8 13 12 18 14.5 C14 14 9 15 5 17 Z" fill="none" stroke="#fff" stroke-width="1.6" stroke-linejoin="round"/></svg>
<div class="r" style="left:1311px;top:1072px;width:8px;height:3px;background:#7a7f8a;border-radius:2px;"></div>
<svg class="s" style="left:1727px;top:1050px;" width="14" height="10" viewBox="0 0 14 10"><path d="M1.5 8 L7 2.5 L12.5 8" fill="none" stroke="#222" stroke-width="1.5"/></svg>
<svg class="s" style="left:1757px;top:1048px;" width="18" height="14" viewBox="0 0 18 14"><path d="M1 5 C5.5 0.5 12.5 0.5 17 5 M3.5 7.5 C6.8 4.5 11.2 4.5 14.5 7.5 M6 10 C7.8 8.5 10.2 8.5 12 10" fill="none" stroke="#222" stroke-width="1.4"/><circle cx="9" cy="12.3" r="1.3" fill="#222"/></svg>
<svg class="s" style="left:1781px;top:1048px;" width="16" height="15" viewBox="0 0 16 15"><path d="M1.5 5 H4.5 L8.5 1.5 V13.5 L4.5 10 H1.5 Z" fill="none" stroke="#222" stroke-width="1.2"/><path d="M10.5 5 C11.5 6.5 11.5 8.5 10.5 10 M12.8 3 C14.8 5.5 14.8 9.5 12.8 12" fill="none" stroke="#222" stroke-width="1.2"/></svg>
<div class="t" style="right:44.00px;top:1041.94px;font-size:11.6px;color:#1a1a1a;">15:01</div>
<div class="t" style="right:43.50px;top:1057.34px;font-size:11.6px;color:#1a1a1a;">31/01/2026</div>
<svg class="s" style="left:1884px;top:1048px;" width="17" height="17" viewBox="0 0 17 17"><path d="M3 12 C4 10 4 8 4 6.5 C4 4 6 2.5 8 2.5 C10 2.5 12 4 12 6.5 C12 8 12 10 13 12 Z" fill="#1a1a1a"/><path d="M6.5 13.5 H9.5 L8 15 Z" fill="#1a1a1a"/><path d="M6 6 H9 L6 10 H9" fill="none" stroke="#d5dbe7" stroke-width="1"/><path d="M12 1 H15 L12 4.5 H15" fill="none" stroke="#1a1a1a" stroke-width="1"/></svg>
</body></html>
